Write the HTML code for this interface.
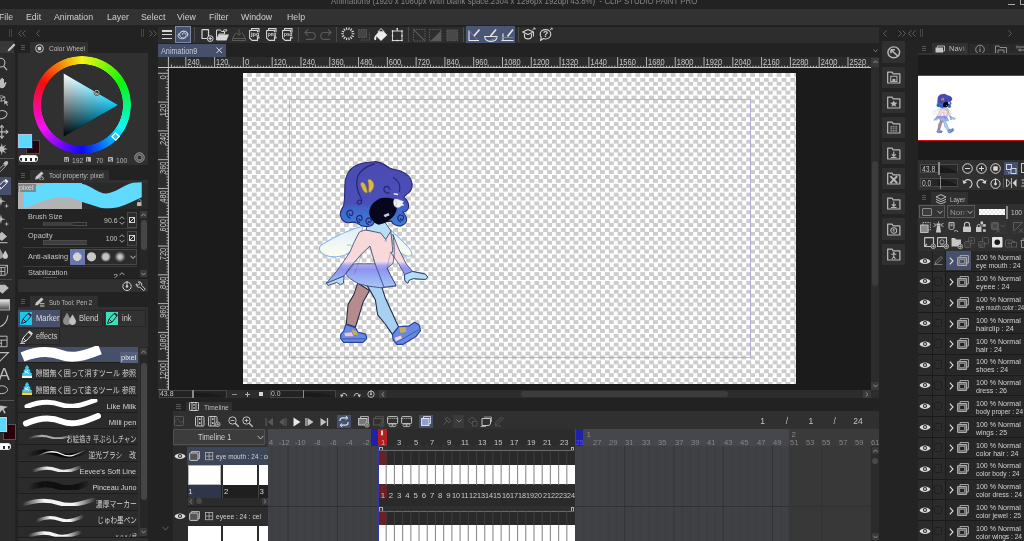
<!DOCTYPE html><html><head><meta charset="utf-8"><title>CLIP STUDIO PAINT PRO</title><style>
*{margin:0;padding:0;box-sizing:border-box}
html,body{width:1024px;height:541px;overflow:hidden;background:#232323}
body{position:relative;font-family:"Liberation Sans","Noto Sans CJK JP",sans-serif;}
div,span.t,svg{position:absolute}
span.t{white-space:nowrap;line-height:1.15;}
svg{overflow:visible}
body{opacity:0.999}
</style></head><body>
<div style="left:0px;top:0px;width:1024px;height:9.4px;background:#222;"></div>
<span class="t" style="left:331.2px;top:-5px;font-size:9.3px;color:#858585;line-height:12px;transform:scaleX(0.845);transform-origin:0 0;">Animation9 (1920 x 1080px With blank space:2304 x 1296px 192dpi 43.8%)&nbsp; - CLIP STUDIO PAINT PRO</span>
<div style="left:1007.7px;top:3.7px;width:7px;height:1px;background:#aaa;"></div>
<div style="left:1020.2px;top:-1px;width:6px;height:5.8px;border:1px solid #aaa;border-top:none;border-radius:0 0 0 1px"></div>
<div style="left:0px;top:9.4px;width:1024px;height:16.1px;background:#323232;"></div>
<span class="t" style="left:-1px;top:11px;font-size:9px;color:#cfcfcf;line-height:12px;transform:scaleX(0.975);transform-origin:0 0;">File</span>
<span class="t" style="left:26px;top:11px;font-size:9px;color:#cfcfcf;line-height:12px;transform:scaleX(0.975);transform-origin:0 0;">Edit</span>
<span class="t" style="left:54px;top:11px;font-size:9px;color:#cfcfcf;line-height:12px;transform:scaleX(0.975);transform-origin:0 0;">Animation</span>
<span class="t" style="left:107px;top:11px;font-size:9px;color:#cfcfcf;line-height:12px;transform:scaleX(0.975);transform-origin:0 0;">Layer</span>
<span class="t" style="left:141px;top:11px;font-size:9px;color:#cfcfcf;line-height:12px;transform:scaleX(0.975);transform-origin:0 0;">Select</span>
<span class="t" style="left:177px;top:11px;font-size:9px;color:#cfcfcf;line-height:12px;transform:scaleX(0.975);transform-origin:0 0;">View</span>
<span class="t" style="left:209px;top:11px;font-size:9px;color:#cfcfcf;line-height:12px;transform:scaleX(0.975);transform-origin:0 0;">Filter</span>
<span class="t" style="left:241px;top:11px;font-size:9px;color:#cfcfcf;line-height:12px;transform:scaleX(0.975);transform-origin:0 0;">Window</span>
<span class="t" style="left:287px;top:11px;font-size:9px;color:#cfcfcf;line-height:12px;transform:scaleX(0.975);transform-origin:0 0;">Help</span>
<div style="left:0px;top:25.5px;width:158px;height:15px;background:#222;"></div>
<div style="left:879px;top:25.5px;width:145px;height:16px;background:#222;"></div>
<div style="left:9px;top:29px;width:1px;height:8px;background:#444;"></div>
<div style="left:11px;top:29px;width:1px;height:8px;background:#444;"></div>
<svg style="left:18px;top:29.5px;" width="8" height="7" viewBox="0 0 8 7"><path d="M3.5 0.5L0.5 3.5L3.5 6.5" stroke="#5e5e5e" stroke-width="1" fill="none"/><path d="M3.5 0.5L0.5 3.5L3.5 6.5" transform="translate(4 0)" stroke="#5e5e5e" stroke-width="1" fill="none"/></svg>
<svg style="left:36px;top:29.5px;" width="8" height="7" viewBox="0 0 8 7"><path d="M3.5 0.5L0.5 3.5L3.5 6.5" stroke="#5e5e5e" stroke-width="1" fill="none"/></svg>
<div style="left:141px;top:29px;width:1px;height:8px;background:#444;"></div>
<div style="left:143px;top:29px;width:1px;height:8px;background:#444;"></div>
<svg style="left:149px;top:29.5px;" width="8" height="7" viewBox="0 0 8 7"><path d="M0.5 0.5L3.5 3.5L0.5 6.5" stroke="#5e5e5e" stroke-width="1" fill="none"/><path d="M0.5 0.5L3.5 3.5L0.5 6.5" transform="translate(4 0)" stroke="#5e5e5e" stroke-width="1" fill="none"/></svg>
<svg style="left:883px;top:29.5px;" width="8" height="7" viewBox="0 0 8 7"><path d="M3.5 0.5L0.5 3.5L3.5 6.5" stroke="#5e5e5e" stroke-width="1" fill="none"/></svg>
<svg style="left:898px;top:29.5px;" width="8" height="7" viewBox="0 0 8 7"><path d="M0.5 0.5L3.5 3.5L0.5 6.5" stroke="#5e5e5e" stroke-width="1" fill="none"/><path d="M0.5 0.5L3.5 3.5L0.5 6.5" transform="translate(4 0)" stroke="#5e5e5e" stroke-width="1" fill="none"/></svg>
<svg style="left:908px;top:29.5px;" width="8" height="7" viewBox="0 0 8 7"><path d="M3.5 0.5L0.5 3.5L3.5 6.5" stroke="#5e5e5e" stroke-width="1" fill="none"/><path d="M3.5 0.5L0.5 3.5L3.5 6.5" transform="translate(4 0)" stroke="#5e5e5e" stroke-width="1" fill="none"/></svg>
<div style="left:920px;top:29px;width:1px;height:8px;background:#444;"></div>
<div style="left:922px;top:29px;width:1px;height:8px;background:#444;"></div>
<svg style="left:1008px;top:29.5px;" width="8" height="7" viewBox="0 0 8 7"><path d="M0.5 0.5L3.5 3.5L0.5 6.5" stroke="#5e5e5e" stroke-width="1" fill="none"/></svg>
<div style="left:158px;top:25.5px;width:721px;height:17.5px;background:#2d2d2d;"></div>
<div style="left:158px;top:25.5px;width:721px;height:0.9px;background:#202020;"></div>
<div style="left:162px;top:30.4px;width:10px;height:1.3px;background:#d6d6d6;"></div>
<div style="left:162px;top:34px;width:10px;height:1.3px;background:#d6d6d6;"></div>
<div style="left:162px;top:37.7px;width:10px;height:1.3px;background:#d6d6d6;"></div>
<div style="left:175px;top:26.3px;width:16px;height:16.3px;background:#48526e;border:1px solid #7f89a6;"></div>
<svg style="left:177px;top:28.5px;" width="12" height="12" viewBox="0 0 12 12"><path d="M6 6.2c-1.2-.8-.6-2.4.9-2.3 2 .1 2.9 2.3 1.6 3.9-1.5 1.7-4.6 1.3-5.6-.9C2 4.600 3.800 2.200 6.600 2.200c2.800 0 4.400 2.300 4 4.600" stroke="#c9cfdf" stroke-width="1" fill="none"/><ellipse cx="6" cy="6" rx="5" ry="3.6" stroke="#c9cfdf" stroke-width="0.9" fill="none" transform="rotate(-20 6 6)"/></svg>
<div style="left:194px;top:27px;width:1px;height:15px;background:#4a4a4a;"></div>
<svg style="left:200.5px;top:28.5px;" width="13" height="13" viewBox="0 0 13 13"><path d="M1 0.600H7.500V8M1 0.600V9.500H6" stroke="#d6d6d6" stroke-width="1.2" fill="none" stroke-linejoin="round"/><circle cx="9.200" cy="9.600" r="2.900" fill="#2d2d2d" stroke="#d6d6d6" stroke-width="1"/><path d="M9.200 7.800V11.400M7.400 9.600H11" stroke="#d6d6d6" stroke-width="1"/></svg>
<svg style="left:216px;top:28.5px;" width="14" height="12" viewBox="0 0 14 12"><path d="M0.500 11V1H4.500L5.500 2.500H8.500V5H3L0.500 11Z" fill="none" stroke="#d6d6d6" stroke-width="1"/><path d="M3 5.500H13L10.500 11.500H0.500Z" fill="#d6d6d6"/><path d="M7 1.500C8.500 .5 10 .5 11 1.500M11 1.500L9.500 0M11 1.500L9.300 2.500" stroke="#d6d6d6" stroke-width="0.900" fill="none"/></svg>
<svg style="left:231.5px;top:28.5px;" width="14" height="12" viewBox="0 0 14 12"><path d="M4 3.500L0.500 9.500V11.500H13.500V9.500L10 3.500M0.500 9.500H13.500" fill="none" stroke="#5a5a5a" stroke-width="1"/><path d="M7 0V6M5 4.200L7 6.500L9 4.200" stroke="#5a5a5a" stroke-width="1" fill="none"/></svg>
<svg style="left:249px;top:28px;" width="12" height="13" viewBox="0 0 12 13"><path d="M2.500 2.500V0.600H10V10H8.500M0.600 2.500H8.500V12.400H3L0.600 10Z" fill="none" stroke="#d6d6d6" stroke-width="1.100" stroke-linejoin="round"/><rect x="1.600" y="4.300" width="9.400" height="4.400" fill="#2d2d2d"/><text x="2" y="7.900" font-size="4.800" font-weight="bold" fill="#dadada" font-family="Liberation Sans,sans-serif" textLength="8.400" lengthAdjust="spacingAndGlyphs">jpg</text></svg>
<svg style="left:265.5px;top:28px;" width="12" height="13" viewBox="0 0 12 13"><path d="M2.500 2.500V0.600H10V10H8.500M0.600 2.500H8.500V12.400H3L0.600 10Z" fill="none" stroke="#d6d6d6" stroke-width="1.100" stroke-linejoin="round"/><rect x="1.600" y="4.300" width="9.400" height="4.400" fill="#2d2d2d"/><text x="2" y="7.900" font-size="4.800" font-weight="bold" fill="#dadada" font-family="Liberation Sans,sans-serif" textLength="8.400" lengthAdjust="spacingAndGlyphs">png</text></svg>
<svg style="left:282px;top:28px;" width="12" height="13" viewBox="0 0 12 13"><path d="M2.500 2.500V0.600H10V10H8.500M0.600 2.500H8.500V12.400H3L0.600 10Z" fill="none" stroke="#d6d6d6" stroke-width="1.100" stroke-linejoin="round"/><rect x="1.600" y="4.300" width="9.400" height="4.400" fill="#2d2d2d"/><text x="2" y="7.900" font-size="4.800" font-weight="bold" fill="#dadada" font-family="Liberation Sans,sans-serif" textLength="8.400" lengthAdjust="spacingAndGlyphs">psd</text></svg>
<div style="left:298px;top:27px;width:1px;height:15px;background:#4a4a4a;"></div>
<svg style="left:303.5px;top:29px;" width="12" height="11" viewBox="0 0 12 11"><path d="M4 0.500L0.800 3.500L4 6.500M0.800 3.500H7.500C9.800 3.500 11.300 5 11.300 7C11.300 9 9.800 10.400 7.500 10.400H2" fill="none" stroke="#5a5a5a" stroke-width="1.100"/></svg>
<svg style="left:319.5px;top:29px;" width="12" height="11" viewBox="0 0 12 11"><path d="M8 0.500L11.200 3.500L8 6.500M11.200 3.500H4.500C2.200 3.500 0.700 5 0.700 7C0.700 9 2.200 10.400 4.500 10.400H10" fill="none" stroke="#5a5a5a" stroke-width="1.100"/></svg>
<div style="left:336px;top:27px;width:1px;height:15px;background:#4a4a4a;"></div>
<svg style="left:340.7px;top:27.4px;" width="14" height="14" viewBox="0 0 14 14"><path d="M10.80 6.80L13.40 6.80M10.40 8.54L12.75 9.66M9.29 9.93L10.92 11.96M7.69 10.70L8.27 13.23M5.91 10.70L5.33 13.23M4.31 9.93L2.68 11.96M3.20 8.54L0.85 9.66M2.80 6.80L0.20 6.80M3.20 5.06L0.85 3.94M4.31 3.67L2.68 1.64M5.91 2.90L5.33 0.37M7.69 2.90L8.27 0.37M9.29 3.67L10.92 1.64M10.40 5.06L12.75 3.94" stroke="#e0e0e0" stroke-width="1.100" fill="none"/></svg>
<svg style="left:358px;top:29px;" width="13" height="12" viewBox="0 0 13 12"><rect x="0.500" y="0.500" width="8" height="8" fill="#444" stroke="#5a5a5a" stroke-width="1" stroke-dasharray="1.500 1"/><path d="M3 11H11.500V3.500" fill="none" stroke="#5a5a5a" stroke-width="1" stroke-dasharray="1.500 1"/></svg>
<svg style="left:373.5px;top:27.8px;" width="14" height="14" viewBox="0 0 14 14"><path d="M7 0.500L13.200 7L7 13L1.500 7.500Z" fill="#ececec"/><path d="M7 0.500L10 3.700H4Z" fill="#2d2d2d" stroke="#ececec" stroke-width="0.800"/><path d="M1.800 7C0.300 8.500 0 10 0.300 11.500C0.600 12.500 2 12.500 2.200 11.500C2.400 10 2.200 9 2.500 8Z" fill="#ececec"/></svg>
<svg style="left:391px;top:28px;" width="13" height="14" viewBox="0 0 13 14"><rect x="1.500" y="3" width="9.500" height="9.500" fill="none" stroke="#e0e0e0" stroke-width="0.900"/><path d="M6.250 0.500V3" stroke="#e0e0e0" stroke-width="0.900"/><g fill="#e8e8e8"><rect x="5.500" y="0" width="1.500" height="1.500"/><rect x="0.800" y="2.300" width="1.400" height="1.400"/><rect x="10.300" y="2.300" width="1.400" height="1.400"/><rect x="0.800" y="11.800" width="1.400" height="1.400"/><rect x="10.300" y="11.800" width="1.400" height="1.400"/><rect x="5.550" y="11.800" width="1.400" height="1.400"/><rect x="0.800" y="7.050" width="1.400" height="1.400"/><rect x="10.300" y="7.050" width="1.400" height="1.400"/></g></svg>
<div style="left:408px;top:27px;width:1px;height:15px;background:#4a4a4a;"></div>
<svg style="left:412.8px;top:28.5px;" width="13" height="13" viewBox="0 0 13 13"><rect x="0.500" y="0.500" width="11.500" height="11.500" fill="none" stroke="#5a5a5a" stroke-width="1" stroke-dasharray="1.500 1"/><path d="M0.500 0.500L12 12" stroke="#5a5a5a" stroke-width="1.100"/></svg>
<svg style="left:429px;top:28.5px;" width="13" height="13" viewBox="0 0 13 13"><rect x="0.500" y="0.500" width="11.500" height="11.500" fill="none" stroke="#5a5a5a" stroke-width="1" stroke-dasharray="1.500 1"/><path d="M12 1.500V12H1.500Z" fill="#5a5a5a"/></svg>
<svg style="left:445.8px;top:28.5px;" width="13" height="13" viewBox="0 0 13 13"><rect x="1" y="1" width="10.500" height="10.500" fill="#484848" stroke="#5a5a5a" stroke-width="1.200" stroke-dasharray="1.500 1"/></svg>
<div style="left:463px;top:27px;width:1px;height:15px;background:#4a4a4a;"></div>
<div style="left:465.5px;top:26.3px;width:49.5px;height:16.3px;background:#4a5676;"></div>
<svg style="left:468px;top:28.5px;" width="13" height="13" viewBox="0 0 13 13"><path d="M1 1.500V11.500H11" fill="none" stroke="#e8e8e8" stroke-width="1.100"/><path d="M1.500 2L9 10.500" stroke="#8e7fb0" stroke-width="0.900"/><path d="M6 7L11.500 0.500" stroke="#e8e8e8" stroke-width="1.600"/></svg>
<svg style="left:483.5px;top:28.5px;" width="14" height="13" viewBox="0 0 14 13"><path d="M0.600 7.500H13C13 10.500 10.500 12.400 7 12.400C3.500 12.400 0.800 10.500 0.600 7.500Z" fill="none" stroke="#e8e8e8" stroke-width="1.100"/><path d="M7.500 10.500C10 10.500 12 9.500 12.500 8" stroke="#8e7fb0" stroke-width="0.900" fill="none"/><path d="M6.500 7L12 0.500" stroke="#e8e8e8" stroke-width="1.600"/></svg>
<svg style="left:500.5px;top:28.5px;" width="13" height="13" viewBox="0 0 13 13"><path d="M2 4.500V12M0.500 11.500H12.500" fill="none" stroke="#e8e8e8" stroke-width="1.100"/><path d="M0.500 8.500H12.500" stroke="#8e7fb0" stroke-width="0.900"/><path d="M6.500 7.500L12 0.500" stroke="#e8e8e8" stroke-width="1.600"/></svg>
<div style="left:517.5px;top:27px;width:1px;height:15px;background:#4a4a4a;"></div>
<svg style="left:521.5px;top:28px;" width="14" height="12" viewBox="0 0 14 12"><path d="M0.600 4L6 1.500L11.500 4L6 6.500Z" fill="none" stroke="#d6d6d6" stroke-width="1.100" stroke-linejoin="round"/><path d="M2.500 5.500V9C3.500 11.500 8.500 11.500 9.500 9V5.500" fill="none" stroke="#d6d6d6" stroke-width="1.100"/><path d="M11.500 4V8.500" stroke="#d6d6d6" stroke-width="1"/><path d="M10.500 2L13 0M13 0H11.300M13 0V1.700" stroke="#d6d6d6" stroke-width="0.800" fill="none"/></svg>
<svg style="left:538.5px;top:27.5px;" width="14" height="14" viewBox="0 0 14 14"><path d="M6.500 1.600C9.500 1.600 11.800 3.600 11.800 6.300C11.800 9 9.500 11 6.500 11C5.700 11 5 10.900 4.300 10.600L1.500 12.500L2.300 9.500C1.600 8.600 1.200 7.500 1.200 6.300C1.200 3.600 3.500 1.600 6.500 1.600Z" fill="none" stroke="#d6d6d6" stroke-width="1.100" stroke-linejoin="round"/><text x="3.900" y="9.400" font-size="8.600" font-weight="bold" fill="#d6d6d6" font-family="Liberation Sans,sans-serif">?</text><path d="M11 2L13.200 0.200M13.200 0.200H11.700M13.200 0.200V1.700" stroke="#d6d6d6" stroke-width="0.800" fill="none"/></svg>
<div style="left:158px;top:43px;width:721px;height:14px;background:#222;"></div>
<div style="left:158px;top:44px;width:68px;height:13px;background:#46506b;"></div>
<span class="t" style="left:161.2px;top:45px;font-size:8.5px;color:#c6cad6;line-height:12px;transform:scaleX(0.854);transform-origin:0 0;">Animation9</span>
<svg style="left:216px;top:47px;" width="7" height="7" viewBox="0 0 7 7"><path d="M0.5 0.5L6 6M6 0.5L0.5 6" stroke="#e0e0e0" stroke-width="1" fill="none"/></svg>
<svg style="left:872.5px;top:48.5px;" width="5" height="4" viewBox="0 0 5 4"><path d="M0.5 0.5L2.5 2.8L4.5 0.5" stroke="#858585" stroke-width="0.9" fill="none"/></svg>
<div style="left:158px;top:57px;width:721px;height:341px;background:#1b1b1b;"></div>
<div style="left:243.3px;top:73.3px;width:552.7px;height:311.0px;background:#fff;background-image:conic-gradient(#cccccc 25%,#fff 25% 50%,#cccccc 50% 75%,#fff 75%);background-size:8.84px 8.84px;"></div>
<div style="left:289.0px;top:98.9px;width:462.2px;height:259.4px;border:0.9px solid rgba(150,150,222,0.6);"></div>
<svg style="left:158px;top:57px;overflow:hidden" width="713" height="11" viewBox="0 0 713 11"><rect x="0" y="0" width="713" height="11" fill="#2c2c2c"/><path d="M13.43 10.5v-3M16.30 10.5v-1.8M19.18 10.5v-1.8M22.06 10.5v-1.8M24.94 10.5v-1.8M27.82 10.5v-10.5M30.70 10.5v-1.8M33.58 10.5v-1.8M36.46 10.5v-1.8M39.34 10.5v-1.8M42.22 10.5v-3M45.09 10.5v-1.8M47.97 10.5v-1.8M50.85 10.5v-1.8M53.73 10.5v-1.8M56.61 10.5v-10.5M59.49 10.5v-1.8M62.37 10.5v-1.8M65.25 10.5v-1.8M68.13 10.5v-1.8M71.01 10.5v-3M73.88 10.5v-1.8M76.76 10.5v-1.8M79.64 10.5v-1.8M82.52 10.5v-1.8M85.40 10.5v-10.5M88.28 10.5v-1.8M91.16 10.5v-1.8M94.04 10.5v-1.8M96.92 10.5v-1.8M99.80 10.5v-3M102.67 10.5v-1.8M105.55 10.5v-1.8M108.43 10.5v-1.8M111.31 10.5v-1.8M114.19 10.5v-10.5M117.07 10.5v-1.8M119.95 10.5v-1.8M122.83 10.5v-1.8M125.71 10.5v-1.8M128.59 10.5v-3M131.46 10.5v-1.8M134.34 10.5v-1.8M137.22 10.5v-1.8M140.10 10.5v-1.8M142.98 10.5v-10.5M145.86 10.5v-1.8M148.74 10.5v-1.8M151.62 10.5v-1.8M154.50 10.5v-1.8M157.38 10.5v-3M160.25 10.5v-1.8M163.13 10.5v-1.8M166.01 10.5v-1.8M168.89 10.5v-1.8M171.77 10.5v-10.5M174.65 10.5v-1.8M177.53 10.5v-1.8M180.41 10.5v-1.8M183.29 10.5v-1.8M186.17 10.5v-3M189.04 10.5v-1.8M191.92 10.5v-1.8M194.80 10.5v-1.8M197.68 10.5v-1.8M200.56 10.5v-10.5M203.44 10.5v-1.8M206.32 10.5v-1.8M209.20 10.5v-1.8M212.08 10.5v-1.8M214.96 10.5v-3M217.83 10.5v-1.8M220.71 10.5v-1.8M223.59 10.5v-1.8M226.47 10.5v-1.8M229.35 10.5v-10.5M232.23 10.5v-1.8M235.11 10.5v-1.8M237.99 10.5v-1.8M240.87 10.5v-1.8M243.75 10.5v-3M246.62 10.5v-1.8M249.50 10.5v-1.8M252.38 10.5v-1.8M255.26 10.5v-1.8M258.14 10.5v-10.5M261.02 10.5v-1.8M263.90 10.5v-1.8M266.78 10.5v-1.8M269.66 10.5v-1.8M272.53 10.5v-3M275.41 10.5v-1.8M278.29 10.5v-1.8M281.17 10.5v-1.8M284.05 10.5v-1.8M286.93 10.5v-10.5M289.81 10.5v-1.8M292.69 10.5v-1.8M295.57 10.5v-1.8M298.45 10.5v-1.8M301.33 10.5v-3M304.20 10.5v-1.8M307.08 10.5v-1.8M309.96 10.5v-1.8M312.84 10.5v-1.8M315.72 10.5v-10.5M318.60 10.5v-1.8M321.48 10.5v-1.8M324.36 10.5v-1.8M327.24 10.5v-1.8M330.12 10.5v-3M332.99 10.5v-1.8M335.87 10.5v-1.8M338.75 10.5v-1.8M341.63 10.5v-1.8M344.51 10.5v-10.5M347.39 10.5v-1.8M350.27 10.5v-1.8M353.15 10.5v-1.8M356.03 10.5v-1.8M358.90 10.5v-3M361.78 10.5v-1.8M364.66 10.5v-1.8M367.54 10.5v-1.8M370.42 10.5v-1.8M373.30 10.5v-10.5M376.18 10.5v-1.8M379.06 10.5v-1.8M381.94 10.5v-1.8M384.82 10.5v-1.8M387.69 10.5v-3M390.57 10.5v-1.8M393.45 10.5v-1.8M396.33 10.5v-1.8M399.21 10.5v-1.8M402.09 10.5v-10.5M404.97 10.5v-1.8M407.85 10.5v-1.8M410.73 10.5v-1.8M413.61 10.5v-1.8M416.49 10.5v-3M419.36 10.5v-1.8M422.24 10.5v-1.8M425.12 10.5v-1.8M428.00 10.5v-1.8M430.88 10.5v-10.5M433.76 10.5v-1.8M436.64 10.5v-1.8M439.52 10.5v-1.8M442.40 10.5v-1.8M445.27 10.5v-3M448.15 10.5v-1.8M451.03 10.5v-1.8M453.91 10.5v-1.8M456.79 10.5v-1.8M459.67 10.5v-10.5M462.55 10.5v-1.8M465.43 10.5v-1.8M468.31 10.5v-1.8M471.19 10.5v-1.8M474.07 10.5v-3M476.94 10.5v-1.8M479.82 10.5v-1.8M482.70 10.5v-1.8M485.58 10.5v-1.8M488.46 10.5v-10.5M491.34 10.5v-1.8M494.22 10.5v-1.8M497.10 10.5v-1.8M499.98 10.5v-1.8M502.86 10.5v-3M505.73 10.5v-1.8M508.61 10.5v-1.8M511.49 10.5v-1.8M514.37 10.5v-1.8M517.25 10.5v-10.5M520.13 10.5v-1.8M523.01 10.5v-1.8M525.89 10.5v-1.8M528.77 10.5v-1.8M531.64 10.5v-3M534.52 10.5v-1.8M537.40 10.5v-1.8M540.28 10.5v-1.8M543.16 10.5v-1.8M546.04 10.5v-10.5M548.92 10.5v-1.8M551.80 10.5v-1.8M554.68 10.5v-1.8M557.56 10.5v-1.8M560.43 10.5v-3M563.31 10.5v-1.8M566.19 10.5v-1.8M569.07 10.5v-1.8M571.95 10.5v-1.8M574.83 10.5v-10.5M577.71 10.5v-1.8M580.59 10.5v-1.8M583.47 10.5v-1.8M586.35 10.5v-1.8M589.23 10.5v-3M592.10 10.5v-1.8M594.98 10.5v-1.8M597.86 10.5v-1.8M600.74 10.5v-1.8M603.62 10.5v-10.5M606.50 10.5v-1.8M609.38 10.5v-1.8M612.26 10.5v-1.8M615.14 10.5v-1.8M618.01 10.5v-3M620.89 10.5v-1.8M623.77 10.5v-1.8M626.65 10.5v-1.8M629.53 10.5v-1.8M632.41 10.5v-10.5M635.29 10.5v-1.8M638.17 10.5v-1.8M641.05 10.5v-1.8M643.93 10.5v-1.8M646.80 10.5v-3M649.68 10.5v-1.8M652.56 10.5v-1.8M655.44 10.5v-1.8M658.32 10.5v-1.8M661.20 10.5v-10.5M664.08 10.5v-1.8M666.96 10.5v-1.8M669.84 10.5v-1.8M672.72 10.5v-1.8M675.59 10.5v-3M678.47 10.5v-1.8M681.35 10.5v-1.8M684.23 10.5v-1.8M687.11 10.5v-1.8M689.99 10.5v-10.5M692.87 10.5v-1.8M695.75 10.5v-1.8M698.63 10.5v-1.8M701.51 10.5v-1.8M704.38 10.5v-3M707.26 10.5v-1.8M710.14 10.5v-1.8" stroke="#c4c4c4" stroke-width="0.9" fill="none"/><path d="M0 10.5H713M10.4 0V11" stroke="#c4c4c4" stroke-width="1" fill="none"/><text x="29.3" y="8.4" font-size="8.2" fill="#c8c8c8" font-family="Liberation Sans,sans-serif" textLength="12.4" lengthAdjust="spacingAndGlyphs">240</text><text x="58.1" y="8.4" font-size="8.2" fill="#c8c8c8" font-family="Liberation Sans,sans-serif" textLength="12.4" lengthAdjust="spacingAndGlyphs">120</text><text x="86.9" y="8.4" font-size="8.2" fill="#c8c8c8" font-family="Liberation Sans,sans-serif" textLength="4.4" lengthAdjust="spacingAndGlyphs">0</text><text x="115.7" y="8.4" font-size="8.2" fill="#c8c8c8" font-family="Liberation Sans,sans-serif" textLength="12.4" lengthAdjust="spacingAndGlyphs">120</text><text x="144.5" y="8.4" font-size="8.2" fill="#c8c8c8" font-family="Liberation Sans,sans-serif" textLength="12.4" lengthAdjust="spacingAndGlyphs">240</text><text x="173.3" y="8.4" font-size="8.2" fill="#c8c8c8" font-family="Liberation Sans,sans-serif" textLength="12.4" lengthAdjust="spacingAndGlyphs">360</text><text x="202.1" y="8.4" font-size="8.2" fill="#c8c8c8" font-family="Liberation Sans,sans-serif" textLength="12.4" lengthAdjust="spacingAndGlyphs">480</text><text x="230.8" y="8.4" font-size="8.2" fill="#c8c8c8" font-family="Liberation Sans,sans-serif" textLength="12.4" lengthAdjust="spacingAndGlyphs">600</text><text x="259.6" y="8.4" font-size="8.2" fill="#c8c8c8" font-family="Liberation Sans,sans-serif" textLength="12.4" lengthAdjust="spacingAndGlyphs">720</text><text x="288.4" y="8.4" font-size="8.2" fill="#c8c8c8" font-family="Liberation Sans,sans-serif" textLength="12.4" lengthAdjust="spacingAndGlyphs">840</text><text x="317.2" y="8.4" font-size="8.2" fill="#c8c8c8" font-family="Liberation Sans,sans-serif" textLength="12.4" lengthAdjust="spacingAndGlyphs">960</text><text x="346.0" y="8.4" font-size="8.2" fill="#c8c8c8" font-family="Liberation Sans,sans-serif" textLength="16.6" lengthAdjust="spacingAndGlyphs">1080</text><text x="374.8" y="8.4" font-size="8.2" fill="#c8c8c8" font-family="Liberation Sans,sans-serif" textLength="16.6" lengthAdjust="spacingAndGlyphs">1200</text><text x="403.6" y="8.4" font-size="8.2" fill="#c8c8c8" font-family="Liberation Sans,sans-serif" textLength="16.6" lengthAdjust="spacingAndGlyphs">1320</text><text x="432.4" y="8.4" font-size="8.2" fill="#c8c8c8" font-family="Liberation Sans,sans-serif" textLength="16.6" lengthAdjust="spacingAndGlyphs">1440</text><text x="461.2" y="8.4" font-size="8.2" fill="#c8c8c8" font-family="Liberation Sans,sans-serif" textLength="16.6" lengthAdjust="spacingAndGlyphs">1560</text><text x="490.0" y="8.4" font-size="8.2" fill="#c8c8c8" font-family="Liberation Sans,sans-serif" textLength="16.6" lengthAdjust="spacingAndGlyphs">1680</text><text x="518.8" y="8.4" font-size="8.2" fill="#c8c8c8" font-family="Liberation Sans,sans-serif" textLength="16.6" lengthAdjust="spacingAndGlyphs">1800</text><text x="547.5" y="8.4" font-size="8.2" fill="#c8c8c8" font-family="Liberation Sans,sans-serif" textLength="16.6" lengthAdjust="spacingAndGlyphs">1920</text><text x="576.3" y="8.4" font-size="8.2" fill="#c8c8c8" font-family="Liberation Sans,sans-serif" textLength="16.6" lengthAdjust="spacingAndGlyphs">2040</text><text x="605.1" y="8.4" font-size="8.2" fill="#c8c8c8" font-family="Liberation Sans,sans-serif" textLength="16.6" lengthAdjust="spacingAndGlyphs">2160</text><text x="633.9" y="8.4" font-size="8.2" fill="#c8c8c8" font-family="Liberation Sans,sans-serif" textLength="16.6" lengthAdjust="spacingAndGlyphs">2280</text><text x="662.7" y="8.4" font-size="8.2" fill="#c8c8c8" font-family="Liberation Sans,sans-serif" textLength="16.6" lengthAdjust="spacingAndGlyphs">2400</text><text x="691.5" y="8.4" font-size="8.2" fill="#c8c8c8" font-family="Liberation Sans,sans-serif" textLength="16.6" lengthAdjust="spacingAndGlyphs">2520</text></svg>
<svg style="left:158px;top:68px;overflow:hidden" width="11" height="322" viewBox="0 0 11 322"><rect x="0" y="0" width="10.4" height="322" fill="#2c2c2c"/><path d="M10.4 2.42h-1.8M10.4 5.30h-10.4M10.4 8.18h-1.8M10.4 11.06h-1.8M10.4 13.94h-1.8M10.4 16.82h-1.8M10.4 19.69h-3M10.4 22.57h-1.8M10.4 25.45h-1.8M10.4 28.33h-1.8M10.4 31.21h-1.8M10.4 34.09h-10.4M10.4 36.97h-1.8M10.4 39.85h-1.8M10.4 42.73h-1.8M10.4 45.61h-1.8M10.4 48.48h-3M10.4 51.36h-1.8M10.4 54.24h-1.8M10.4 57.12h-1.8M10.4 60.00h-1.8M10.4 62.88h-10.4M10.4 65.76h-1.8M10.4 68.64h-1.8M10.4 71.52h-1.8M10.4 74.40h-1.8M10.4 77.27h-3M10.4 80.15h-1.8M10.4 83.03h-1.8M10.4 85.91h-1.8M10.4 88.79h-1.8M10.4 91.67h-10.4M10.4 94.55h-1.8M10.4 97.43h-1.8M10.4 100.31h-1.8M10.4 103.19h-1.8M10.4 106.06h-3M10.4 108.94h-1.8M10.4 111.82h-1.8M10.4 114.70h-1.8M10.4 117.58h-1.8M10.4 120.46h-10.4M10.4 123.34h-1.8M10.4 126.22h-1.8M10.4 129.10h-1.8M10.4 131.98h-1.8M10.4 134.86h-3M10.4 137.73h-1.8M10.4 140.61h-1.8M10.4 143.49h-1.8M10.4 146.37h-1.8M10.4 149.25h-10.4M10.4 152.13h-1.8M10.4 155.01h-1.8M10.4 157.89h-1.8M10.4 160.77h-1.8M10.4 163.64h-3M10.4 166.52h-1.8M10.4 169.40h-1.8M10.4 172.28h-1.8M10.4 175.16h-1.8M10.4 178.04h-10.4M10.4 180.92h-1.8M10.4 183.80h-1.8M10.4 186.68h-1.8M10.4 189.56h-1.8M10.4 192.44h-3M10.4 195.31h-1.8M10.4 198.19h-1.8M10.4 201.07h-1.8M10.4 203.95h-1.8M10.4 206.83h-10.4M10.4 209.71h-1.8M10.4 212.59h-1.8M10.4 215.47h-1.8M10.4 218.35h-1.8M10.4 221.23h-3M10.4 224.10h-1.8M10.4 226.98h-1.8M10.4 229.86h-1.8M10.4 232.74h-1.8M10.4 235.62h-10.4M10.4 238.50h-1.8M10.4 241.38h-1.8M10.4 244.26h-1.8M10.4 247.14h-1.8M10.4 250.01h-3M10.4 252.89h-1.8M10.4 255.77h-1.8M10.4 258.65h-1.8M10.4 261.53h-1.8M10.4 264.41h-10.4M10.4 267.29h-1.8M10.4 270.17h-1.8M10.4 273.05h-1.8M10.4 275.93h-1.8M10.4 278.81h-3M10.4 281.68h-1.8M10.4 284.56h-1.8M10.4 287.44h-1.8M10.4 290.32h-1.8M10.4 293.20h-10.4M10.4 296.08h-1.8M10.4 298.96h-1.8M10.4 301.84h-1.8M10.4 304.72h-1.8M10.4 307.59h-3M10.4 310.47h-1.8M10.4 313.35h-1.8M10.4 316.23h-1.8M10.4 319.11h-1.8M10.4 321.99h-10.4" stroke="#c4c4c4" stroke-width="0.9" fill="none"/><path d="M10.4 0V322" stroke="#c4c4c4" stroke-width="1" fill="none"/><text transform="translate(8.4 11.5) rotate(-90)" font-size="8.2" fill="#c8c8c8" font-family="Liberation Sans,sans-serif" textLength="4.4" lengthAdjust="spacingAndGlyphs">0</text><text transform="translate(8.4 48.3) rotate(-90)" font-size="8.2" fill="#c8c8c8" font-family="Liberation Sans,sans-serif" textLength="12.4" lengthAdjust="spacingAndGlyphs">120</text><text transform="translate(8.4 77.1) rotate(-90)" font-size="8.2" fill="#c8c8c8" font-family="Liberation Sans,sans-serif" textLength="12.4" lengthAdjust="spacingAndGlyphs">240</text><text transform="translate(8.4 105.9) rotate(-90)" font-size="8.2" fill="#c8c8c8" font-family="Liberation Sans,sans-serif" textLength="12.4" lengthAdjust="spacingAndGlyphs">360</text><text transform="translate(8.4 134.7) rotate(-90)" font-size="8.2" fill="#c8c8c8" font-family="Liberation Sans,sans-serif" textLength="12.4" lengthAdjust="spacingAndGlyphs">480</text><text transform="translate(8.4 163.5) rotate(-90)" font-size="8.2" fill="#c8c8c8" font-family="Liberation Sans,sans-serif" textLength="12.4" lengthAdjust="spacingAndGlyphs">600</text><text transform="translate(8.4 192.2) rotate(-90)" font-size="8.2" fill="#c8c8c8" font-family="Liberation Sans,sans-serif" textLength="12.4" lengthAdjust="spacingAndGlyphs">720</text><text transform="translate(8.4 221.0) rotate(-90)" font-size="8.2" fill="#c8c8c8" font-family="Liberation Sans,sans-serif" textLength="12.4" lengthAdjust="spacingAndGlyphs">840</text><text transform="translate(8.4 249.8) rotate(-90)" font-size="8.2" fill="#c8c8c8" font-family="Liberation Sans,sans-serif" textLength="12.4" lengthAdjust="spacingAndGlyphs">960</text><text transform="translate(8.4 282.8) rotate(-90)" font-size="8.2" fill="#c8c8c8" font-family="Liberation Sans,sans-serif" textLength="16.6" lengthAdjust="spacingAndGlyphs">1080</text><text transform="translate(8.4 311.6) rotate(-90)" font-size="8.2" fill="#c8c8c8" font-family="Liberation Sans,sans-serif" textLength="16.6" lengthAdjust="spacingAndGlyphs">1200</text><text transform="translate(8.4 340.4) rotate(-90)" font-size="8.2" fill="#c8c8c8" font-family="Liberation Sans,sans-serif" textLength="16.6" lengthAdjust="spacingAndGlyphs">1320</text></svg>
<div style="left:871px;top:57px;width:8px;height:341px;background:#2c2c2c;"></div>
<div style="left:158px;top:390px;width:721px;height:8px;background:#2c2c2c;"></div>
<svg style="left:0px;top:0px;pointer-events:none" width="1024" height="541" viewBox="0 0 1024 541"><defs>
<linearGradient id="hairg" gradientUnits="userSpaceOnUse" x1="0" y1="45" x2="0" y2="470"><stop offset="0" stop-color="#4a4bb2"/><stop offset="0.640" stop-color="#4a4fb8"/><stop offset="0.720" stop-color="#4264c8"/><stop offset="0.860" stop-color="#3c74d4"/><stop offset="1" stop-color="#3c7cdc"/></linearGradient>
<linearGradient id="coatg" gradientUnits="userSpaceOnUse" x1="0" y1="60" x2="0" y2="490"><stop offset="0" stop-color="#f7dadc"/><stop offset="0.520" stop-color="#f8d8d8"/><stop offset="0.590" stop-color="#f3dcea"/><stop offset="0.655" stop-color="#a9a4ee"/><stop offset="0.720" stop-color="#8d94f0"/><stop offset="0.850" stop-color="#98aef4"/><stop offset="1" stop-color="#a8c6f6"/></linearGradient>
<linearGradient id="wingg" gradientUnits="userSpaceOnUse" x1="0" y1="70" x2="0" y2="290"><stop offset="0" stop-color="#dbeaf9"/><stop offset="0.500" stop-color="#eef6f6"/><stop offset="1" stop-color="#fdfde9"/></linearGradient>
</defs><g transform="translate(320 275) scale(0.14778)" stroke-linejoin="round"><path d="M255 55L335 105L292 182L272 250L240 352L178 332L190 200L230 130Z" fill="#b48c8e" stroke="#1d2440" stroke-width="7"/><path d="M318 72L415 70L440 150L490 260L532 352L490 402L440 330L390 270L375 170L342 110Z" fill="#a8d0f0" stroke="#1d2440" stroke-width="7"/><path d="M140 402L160 380L175 335L240 356L255 386L310 400L316 430L290 456L160 456L140 430Z" fill="#6a88e2" stroke="#27449a" stroke-width="8"/><path d="M165 392L215 388L225 415L170 415Z" fill="#f0c8cc"/><path d="M215 368L250 380L255 408L225 405Z" fill="#c8ac58"/><path d="M150 432H305" stroke="#2f56b4" stroke-width="6"/><path d="M490 402L532 350L600 346L640 320L670 336L680 376L650 416L560 470L520 470L495 440Z" fill="#6a88e2" stroke="#27449a" stroke-width="8"/><path d="M505 425L548 410L555 430L512 448Z" fill="#f0d4d8"/><path d="M535 356L580 352L585 385L545 392Z" fill="#c8ac58"/><path d="M515 458L665 372" stroke="#2f56b4" stroke-width="6"/></g><g transform="translate(310 215) scale(0.14790)" stroke-linejoin="round"><path d="M360 75C300 90 200 130 150 160C110 182 80 198 68 212C55 232 75 262 100 270C150 290 210 285 250 265C290 240 330 180 360 75Z" fill="url(#wingg)" stroke="#86b9ec" stroke-width="7"/><path d="M250 205C270 195 295 210 290 240C285 262 262 268 245 258" fill="none" stroke="#86b9ec" stroke-width="6"/><path d="M545 100C585 135 640 190 665 218C690 245 695 268 680 276C660 284 625 268 590 240C570 222 555 190 545 100Z" fill="url(#wingg)" stroke="#86b9ec" stroke-width="7"/><path d="M240 398L270 430L330 466L400 482L480 492L582 480L540 400L510 330L300 330Z" fill="url(#coatg)" stroke="#2a3562" stroke-width="5"/><path d="M110 460L122 476L180 456L205 472L226 460L230 412Z" fill="#b5dcf5" stroke="#1e2a55" stroke-width="5"/><path d="M332 118C345 108 370 100 400 100L545 108C552 150 556 200 560 250L546 252L600 332L640 402L640 440L660 462L672 440L700 430L780 436L796 420L780 400L692 380L650 330L600 230L560 130C570 180 575 280 560 330L520 360L582 478L500 488L440 330L405 210L350 262L280 342L230 412L110 462L180 380L230 310L270 250L300 180Z" fill="url(#coatg)" stroke="#2a3562" stroke-width="5"/><path d="M640 402L692 382L780 400L796 420L780 436L700 430L672 440L660 462L640 440Z" fill="#b5dcf5" stroke="#1e2a55" stroke-width="5"/><path d="M405 210L440 330L500 488M350 262L300 400M545 250L520 360" fill="none" stroke="#6a6aa8" stroke-width="4" opacity="0.700"/><path d="M385 70L400 40L500 40L548 108L512 165L478 122L380 102Z" fill="#b8ddf6" stroke="#1e2a55" stroke-width="5"/><circle cx="512" cy="172" r="6" fill="none" stroke="#5a78b0" stroke-width="3"/></g><g transform="translate(330 154.800) scale(0.14778 0.15250)" stroke-linejoin="round"><path d="M300 45C330 42 365 60 400 85C420 95 450 98 480 108C520 122 550 150 556 190C558 225 540 250 510 265L500 280C525 295 538 325 530 350C524 366 508 374 492 376C512 395 524 420 515 440C505 462 478 470 455 464C438 460 422 448 415 435L300 442C290 462 265 472 240 470C215 468 195 458 182 448C170 440 150 440 125 445C100 448 75 425 70 395C68 375 78 355 92 335C98 300 100 260 100 220C100 190 104 160 112 140C125 105 160 75 195 62C230 50 270 46 300 45Z" fill="url(#hairg)" stroke="#25266e" stroke-width="7"/><path d="M300 60C250 75 205 105 188 140C175 175 180 230 205 275C222 300 212 330 192 322C176 314 190 292 206 300M430 150C465 170 480 205 470 240M400 250C380 255 360 240 365 220C372 200 400 205 405 225M135 415C110 405 105 375 128 365C150 358 165 380 150 395C142 402 130 398 130 388M200 445C178 438 172 410 192 400C212 392 226 412 214 426C206 434 196 430 196 420M262 458C242 452 236 426 254 416C272 408 286 426 276 440C270 447 260 444 260 436M478 440C456 432 452 405 472 396C492 390 504 410 494 424C486 432 476 428 476 418" fill="none" stroke="#25266e" stroke-width="8" stroke-linecap="round"/><path d="M335 286C350 280 395 280 425 286C440 292 450 318 452 345C452 372 438 398 420 412C405 426 385 438 370 448L330 458C312 452 300 446 292 436C278 418 262 398 266 372C268 350 278 330 296 312Z" fill="#06061c"/><path d="M210 182C224 172 240 192 246 214C250 228 256 240 252 250C240 254 226 240 218 222C210 206 202 192 210 182ZM258 162C270 154 288 166 296 188C302 208 292 232 268 250C258 244 260 226 262 210C264 194 252 172 258 162Z" fill="#d9b84e" stroke="#8c6a22" stroke-width="4"/><path d="M435 292C455 285 475 300 498 305L490 318L502 330L480 335C470 350 450 350 436 335C428 322 428 302 435 292Z" fill="#eef0f6" stroke="#b4c4e4" stroke-width="3"/><path d="M440 300C450 300 452 330 444 338" stroke="#d8b8a8" stroke-width="5" fill="none"/><path d="M432 250L462 256L460 266L430 260Z" fill="#e4e8f4"/><path d="M362 395L395 382L404 396L372 410Z" fill="#c8ccd8"/></g></svg>
<div style="left:871px;top:57.5px;width:8px;height:9px;background:#3a3a3a;"></div>
<svg style="left:872.5px;top:60px;" width="5" height="4" viewBox="0 0 5 4"><path d="M0.500 3L2.500 0.800L4.500 3" fill="none" stroke="#999" stroke-width="0.900"/></svg>
<div style="left:872px;top:160.8px;width:6px;height:125.5px;background:#3c3c3c;border-radius:3px;"></div>
<div style="left:871px;top:381.6px;width:8px;height:8px;background:#3a3a3a;"></div>
<svg style="left:872.5px;top:384px;" width="5" height="4" viewBox="0 0 5 4"><path d="M0.500 0.800L2.500 3L4.500 0.800" fill="none" stroke="#999" stroke-width="0.900"/></svg>
<div style="left:158.5px;top:390px;width:68px;height:7.8px;background:#232323;border:1px solid #454545;"></div>
<svg style="left:192px;top:390.5px;" width="34.0" height="6.8" viewBox="0 0 34.0 6.8"><path d="M0 6.800V1.500C13.8 1.500 24.1 2.500 34.0 6.500V6.800Z" fill="#1a1a1a"/></svg>
<span class="t" style="left:159.5px;top:388px;font-size:7.8px;color:#c4c4c4;line-height:11px;transform:scaleX(0.889);transform-origin:0 0;">43.8</span>
<div style="left:192px;top:389.6px;width:1.5px;height:8.4px;background:#8a8a8a;"></div>
<div style="left:269.5px;top:390px;width:66.3px;height:7.8px;background:#232323;border:1px solid #454545;"></div>
<svg style="left:302.5px;top:390.5px;" width="32.80000000000001" height="6.8" viewBox="0 0 32.80000000000001 6.8"><path d="M0 6.800V1.500C13.3 1.500 23.3 2.500 32.8 6.500V6.800Z" fill="#1a1a1a"/></svg>
<span class="t" style="left:270.5px;top:388px;font-size:7.8px;color:#c4c4c4;line-height:11px;transform:scaleX(0.876);transform-origin:0 0;">0.0</span>
<div style="left:302.5px;top:389.6px;width:1.5px;height:8.4px;background:#8a8a8a;"></div>
<div style="left:231.5px;top:393.5px;width:5px;height:1px;background:#8a8a8a;"></div>
<div style="left:245px;top:393.5px;width:5px;height:1px;background:#b0b0b0;"></div>
<div style="left:247px;top:391.5px;width:1px;height:5px;background:#b0b0b0;"></div>
<div style="left:259.3px;top:392px;width:3.6px;height:3.6px;background:#d8d8d8;"></div>
<svg style="left:339.5px;top:390.5px;" width="8" height="7" viewBox="0 0 8 7"><path d="M1.500 5.500C1.500 1.500 6.500 1.500 6.800 5.200" fill="none" stroke="#c4c4c4" stroke-width="1"/><path d="M0 3.500L1.500 6.500L3.500 4Z" fill="#c4c4c4"/></svg>
<svg style="left:352.8px;top:390.5px;" width="8" height="7" viewBox="0 0 8 7"><path d="M6.500 5.500C6.500 1.500 1.500 1.500 1.200 5.200" fill="none" stroke="#c4c4c4" stroke-width="1"/><path d="M8 3.500L6.500 6.500L4.500 4Z" fill="#c4c4c4"/></svg>
<svg style="left:367px;top:390.3px;" width="8" height="8" viewBox="0 0 8 8"><circle cx="4" cy="4.200" r="3.200" fill="none" stroke="#c4c4c4" stroke-width="0.900"/><path d="M4 0.300V4.200" stroke="#c4c4c4" stroke-width="0.900"/><circle cx="4" cy="4.300" r="1" fill="#c4c4c4"/></svg>
<div style="left:379px;top:390.3px;width:7px;height:7.4px;background:#3a3a3a;"></div>
<svg style="left:380.8px;top:391.5px;" width="4" height="5" viewBox="0 0 4 5"><path d="M3 0.500L0.800 2.500L3 4.500" fill="none" stroke="#999" stroke-width="0.900"/></svg>
<div style="left:521.3px;top:391px;width:206.7px;height:6px;background:#3c3c3c;border-radius:3px;"></div>
<div style="left:863px;top:390.3px;width:8px;height:7.4px;background:#3a3a3a;"></div>
<svg style="left:865.2px;top:391.5px;" width="4" height="5" viewBox="0 0 4 5"><path d="M0.800 0.500L3 2.500L0.800 4.500" fill="none" stroke="#999" stroke-width="0.900"/></svg>
<div style="left:0px;top:40.5px;width:158px;height:501px;background:#222222;"></div>
<div style="left:0px;top:52.5px;width:14.5px;height:489px;background:#2b2b2b;"></div>
<div style="left:0px;top:40.5px;width:14.3px;height:12px;background:#383838;"></div>
<svg style="left:6.5px;top:43px;" width="9" height="9" viewBox="0 0 9 9"><path d="M0.500 8.500L1.500 6L7 0.500L8.500 2L3 7.500Z" fill="#c8c8c8"/></svg>
<svg style="left:-2.6px;top:57px;" width="14" height="14" viewBox="0 0 16 16"><circle cx="4" cy="6.500" r="5" fill="none" stroke="#bcbcbc" stroke-width="1.200"/><path d="M7.500 10.500L11.500 15" stroke="#bcbcbc" stroke-width="1.400"/></svg>
<svg style="left:-2.6px;top:75px;" width="14" height="14" viewBox="0 0 16 16"><path d="M1 6V10C1 13 3 15 6 15C8 15 9 13.500 9.500 12L11 8.500L9.500 8L8 10V4.500H6.800V8V3.500H5.500V8V4H4.200V8.500V5.500H3V10L2 8V6Z" fill="#bcbcbc"/></svg>
<svg style="left:-2.6px;top:92.5px;" width="14" height="14" viewBox="0 0 16 16"><path d="M1 4.500L5 3L9 4.500V8L5 9.500L1 8ZM1 4.500L5 6L9 4.500M5 6V9.500" fill="none" stroke="#bcbcbc" stroke-width="0.900"/><path d="M8 8L13.500 10.500L11.200 11.200L12.500 14L11.500 14.500L10.200 11.800L8.500 13.500Z" fill="#bcbcbc"/></svg>
<svg style="left:-2.6px;top:108.5px;" width="14" height="14" viewBox="0 0 16 16"><ellipse cx="5" cy="6.500" rx="6.500" ry="4.500" fill="none" stroke="#bcbcbc" stroke-width="1.100" transform="rotate(-15 5 6.500)"/><path d="M1 10.500C0 12 1.500 14 3.500 13" fill="none" stroke="#bcbcbc" stroke-width="1"/></svg>
<svg style="left:-2.6px;top:125px;" width="14" height="14" viewBox="0 0 16 16"><path d="M5.500 0.500V15M-1.500 7.800H12.500" stroke="#bcbcbc" stroke-width="1.300"/><path d="M3.300 3L5.500 0.500L7.700 3M3.300 12.500L5.500 15L7.700 12.500M10 5.600L12.500 7.800L10 10" fill="none" stroke="#bcbcbc" stroke-width="1.200"/></svg>
<svg style="left:-2.6px;top:141.5px;" width="14" height="14" viewBox="0 0 16 16"><path d="M5.500 1L6.500 5.500L10.500 3L7.800 6.800L12.500 8L7.800 9.200L10.500 13L6.500 10.500L5.500 15L4.500 10.500L0.500 13L3.200 9.200L-1.500 8L3.200 6.800L0.500 3L4.500 5.500Z" fill="#bcbcbc"/></svg>
<div style="left:0px;top:157.5px;width:14px;height:1px;background:#555;"></div>
<svg style="left:-2.6px;top:160px;" width="14" height="14" viewBox="0 0 16 16"><path d="M0.500 14.500L1.500 11.500L7.500 5.500L9.500 7.500L3.500 13.500Z" fill="none" stroke="#bcbcbc" stroke-width="1"/><path d="M7 4L9 2C10 1 11.500 1 12.300 1.800C13 2.500 13 4 12 5L10 7Z" fill="#bcbcbc"/></svg>
<div style="left:0px;top:176.5px;width:10.5px;height:18px;background:#46506b;"></div>
<svg style="left:-2.6px;top:178px;" width="14" height="14" viewBox="0 0 16 16"><path d="M1 13.500L2 9L8 3L11 6L5 12ZM2 9L5 12" fill="none" stroke="#fff" stroke-width="1.100" stroke-linejoin="round"/><path d="M8.500 2.500L10 1L13 4L11.500 5.500Z" fill="#fff"/></svg>
<svg style="left:-2.6px;top:195px;" width="14" height="14" viewBox="0 0 16 16"><path d="M4.500 1.500L5.600 6L10 7L5.600 8L4.500 12.500L3.400 8L-1 7L3.400 6Z" fill="#bcbcbc"/><path d="M11 9.500L11.600 12L14 12.600L11.600 13.200L11 15.500L10.400 13.200L8 12.600L10.400 12Z" fill="#bcbcbc"/></svg>
<svg style="left:-2.6px;top:212.5px;" width="14" height="14" viewBox="0 0 16 16"><path d="M4.500 1.500L5.600 6L10 7L5.600 8L4.500 12.500L3.400 8L-1 7L3.400 6Z" fill="#bcbcbc"/><path d="M11 9.500L11.600 12L14 12.600L11.600 13.200L11 15.500L10.400 13.200L8 12.600L10.400 12Z" fill="#bcbcbc"/></svg>
<svg style="left:-2.6px;top:229.5px;" width="14" height="14" viewBox="0 0 16 16"><path d="M5.500 2L11.500 7.500L5.500 12.500L-0.500 7.500Z" fill="#bcbcbc"/><path d="M-1 14.500H12" stroke="#bcbcbc" stroke-width="1.200"/></svg>
<svg style="left:-2.6px;top:247px;" width="14" height="14" viewBox="0 0 16 16"><path d="M3.500 2C5 5 7 7.500 7 10C7 12 5.500 13.500 3.500 13.500C1.500 13.500 0 12 0 10C0 7.500 2 5 3.500 2Z" fill="#9a9a9a"/><path d="M9.500 4C11 6.500 12.500 8.500 12.500 10.500C12.500 12.300 11.200 13.500 9.500 13.500C7.800 13.500 6.500 12.300 6.500 10.500C6.500 8.500 8 6.500 9.500 4Z" fill="#c8c8c8"/></svg>
<svg style="left:-2.6px;top:263.5px;" width="14" height="14" viewBox="0 0 16 16"><path d="M0.500 4H9V13H0.500ZM0.500 4L3.500 1.500H12V10.500L9 13M9 4L12 1.500M0.500 8.500H9M4.800 4V13" fill="none" stroke="#bcbcbc" stroke-width="1"/></svg>
<svg style="left:-2.6px;top:281px;" width="14" height="14" viewBox="0 0 16 16"><path d="M6 1L13.500 8L6 14.500L-1 8Z" fill="#bcbcbc"/><path d="M6 1L9.500 4.300H2.500Z" fill="#2b2b2b"/></svg>
<div style="left:0px;top:278.5px;width:12px;height:1px;background:#4a4a4a;"></div>
<svg style="left:0px;top:299px;" width="11" height="12" viewBox="0 0 11 12"><defs><linearGradient id="tg1" x1="0" y1="0" x2="0" y2="1"><stop offset="0" stop-color="#eee"/><stop offset="1" stop-color="#444"/></linearGradient></defs><rect x="-1" y="0.500" width="10.500" height="10.500" fill="url(#tg1)" stroke="#bbb" stroke-width="0.900"/></svg>
<svg style="left:-2.6px;top:314.5px;" width="14" height="14" viewBox="0 0 16 16"><path d="M-1 14.500C7 13.500 11.500 8 12.500 0.500" fill="none" stroke="#bcbcbc" stroke-width="1.200"/></svg>
<svg style="left:-2.6px;top:333.5px;" width="14" height="14" viewBox="0 0 16 16"><path d="M-1 2.500H11.500V14.500H-1M-1 7H11.500M5 7V14.500M-1 10.500H5" fill="none" stroke="#bcbcbc" stroke-width="1.100"/></svg>
<svg style="left:-2.6px;top:349.5px;" width="14" height="14" viewBox="0 0 16 16"><path d="M-1 3H13L2 14" fill="none" stroke="#bcbcbc" stroke-width="1.300"/></svg>
<span class="t" style="left:-1.5px;top:364px;font-size:17px;color:#bcbcbc;line-height:21px;font-weight:normal;">A</span>
<svg style="left:-2.6px;top:384px;" width="14" height="14" viewBox="0 0 16 16"><ellipse cx="5.500" cy="6.500" rx="6.500" ry="4.500" fill="none" stroke="#bcbcbc" stroke-width="1.100"/><path d="M1 10L-0.500 13.500L4 11" fill="none" stroke="#bcbcbc" stroke-width="1"/></svg>
<div style="left:0px;top:399.5px;width:14px;height:1px;background:#555;"></div>
<svg style="left:-2.6px;top:400.5px;" width="14" height="14" viewBox="0 0 16 16"><path d="M0 4.500L12.500 6.500L7.500 9L10 13.500L8.500 14.500L6 10L3 13.500Z" fill="#bcbcbc"/></svg>
<div style="left:3px;top:424px;width:13px;height:16px;background:#2a0008;border:1px solid #555;"></div>
<div style="left:-1px;top:416.5px;width:8px;height:15.5px;background:#5ad8ff;border:1px solid #c8d0e8;outline:1px solid #222;"></div>
<div style="left:-3px;top:443.2px;width:14px;height:6.5px;background:#fff;border-radius:3px;background-image:linear-gradient(#fff 50%,transparent 50%),repeating-linear-gradient(90deg,#2a2a2a 0 2.500px,#fff 2.500px 5px);border:1px solid #e4e4e4;"></div>
<div style="left:20.5px;top:45px;width:4.5px;height:1px;background:#555;"></div>
<div style="left:20.5px;top:47px;width:4.5px;height:1px;background:#555;"></div>
<div style="left:20.5px;top:49px;width:4.5px;height:1px;background:#555;"></div>
<div style="left:29.5px;top:42px;width:58px;height:11px;background:#303030;border-radius:1px 1px 0 0;"></div>
<span class="t" style="left:49px;top:43px;font-size:7.8px;color:#bdbdbd;line-height:11px;transform:scaleX(0.839);transform-origin:0 0;">Color Wheel</span>
<svg style="left:35px;top:44px;" width="9" height="9" viewBox="0 0 9 9"><circle cx="4.500" cy="4.500" r="3.900" fill="none" stroke="#ccc" stroke-width="1"/><rect x="2.800" y="2.800" width="3.400" height="3.400" rx="0.800" fill="#ccc"/></svg>
<div style="left:17.5px;top:52.5px;width:130px;height:112.5px;background:#303030;"></div>
<div style="left:33.2px;top:56.2px;width:97.6px;height:97.6px;border-radius:50%;background:conic-gradient(hsl(60,92%,52%) 0deg,hsl(75,92%,50%) 15deg,hsl(90,92%,50%) 30deg,hsl(105,92%,50%) 45deg,hsl(120,92%,50%) 60deg,hsl(135,92%,50%) 75deg,hsl(150,92%,50%) 90deg,hsl(165,92%,50%) 105deg,hsl(180,92%,52%) 120deg,hsl(195,92%,50%) 135deg,hsl(210,92%,50%) 150deg,hsl(225,92%,50%) 165deg,hsl(240,92%,50%) 180deg,hsl(255,92%,50%) 195deg,hsl(270,92%,50%) 210deg,hsl(285,92%,50%) 225deg,hsl(300,92%,52%) 240deg,hsl(315,92%,50%) 255deg,hsl(330,92%,50%) 270deg,hsl(345,92%,50%) 285deg,hsl(0,92%,50%) 300deg,hsl(15,92%,50%) 315deg,hsl(30,92%,50%) 330deg,hsl(45,92%,50%) 345deg,hsl(60,92%,52%) 360deg);-webkit-mask:radial-gradient(circle,transparent 40.600px,#000 41.200px);mask:radial-gradient(circle,transparent 40.600px,#000 41.200px);"></div>
<svg style="left:0px;top:0px;" width="160" height="170" viewBox="0 0 160 170"><defs>
<linearGradient id="trw" x1="63.700" y1="73.600" x2="90.850" y2="120.800" gradientUnits="userSpaceOnUse"><stop offset="0" stop-color="#fff" stop-opacity="1"/><stop offset="1" stop-color="#fff" stop-opacity="0"/></linearGradient>
<linearGradient id="trh" x1="118" y1="105" x2="63.700" y2="105" gradientUnits="userSpaceOnUse"><stop offset="0" stop-color="#10c4f2" stop-opacity="1"/><stop offset="1" stop-color="#10c4f2" stop-opacity="0"/></linearGradient>
</defs>
<g style="isolation:isolate"><polygon points="63.700,73.600 118,105 63.700,136.600" fill="#000"/>
<polygon points="63.700,73.600 118,105 63.700,136.600" fill="url(#trw)" style="mix-blend-mode:plus-lighter"/>
<polygon points="63.700,73.600 118,105 63.700,136.600" fill="url(#trh)" style="mix-blend-mode:plus-lighter"/></g>
<circle cx="96.800" cy="92.600" r="2.300" fill="none" stroke="#222" stroke-width="1.600"/><circle cx="96.800" cy="92.600" r="2.300" fill="none" stroke="#ddd" stroke-width="0.800"/>
<rect x="-2.600" y="-2.600" width="5.200" height="5.200" transform="translate(115.600 136.600) rotate(42)" fill="#3fc4ee" stroke="#fff" stroke-width="1.200"/>
</svg>
<div style="left:26px;top:140px;width:13.5px;height:13.5px;background:#2a0008;border:1px solid #4a4a4a;"></div>
<div style="left:18px;top:133.5px;width:13.5px;height:14.5px;background:#5ad8ff;border:1px solid #b8c0e0;outline:1px solid #2a3350;"></div>
<div style="left:18.5px;top:155px;width:19.5px;height:7px;background:#fff;border-radius:3px;background-image:linear-gradient(#fff 50%,transparent 50%),repeating-linear-gradient(90deg,#2a2a2a 0 2.500px,#fff 2.500px 5px);border:1px solid #e4e4e4;"></div>
<div style="left:63.8px;top:156.8px;width:4.8px;height:5.4px;background:#b8b8b8;border-radius:1px;"></div>
<span class="t" style="left:64.39999999999999px;top:157px;font-size:4.8px;color:#2d2d2d;line-height:7px;font-weight:bold;">H</span>
<span class="t" style="left:72px;top:155px;font-size:8px;color:#b4b4b4;line-height:11px;transform:scaleX(0.847);transform-origin:0 0;">192</span>
<div style="left:86.2px;top:156.8px;width:4.8px;height:5.4px;background:#b8b8b8;border-radius:1px;"></div>
<span class="t" style="left:86.8px;top:157px;font-size:4.8px;color:#2d2d2d;line-height:7px;font-weight:bold;">L</span>
<span class="t" style="left:96.3px;top:155px;font-size:8px;color:#b4b4b4;line-height:11px;transform:scaleX(0.809);transform-origin:0 0;">70</span>
<div style="left:108.2px;top:156.8px;width:4.8px;height:5.4px;background:#b8b8b8;border-radius:1px;"></div>
<span class="t" style="left:108.8px;top:157px;font-size:4.8px;color:#2d2d2d;line-height:7px;font-weight:bold;">S</span>
<span class="t" style="left:115.8px;top:155px;font-size:8px;color:#b4b4b4;line-height:11px;transform:scaleX(0.847);transform-origin:0 0;">100</span>
<svg style="left:133.5px;top:151.5px;" width="11" height="11" viewBox="0 0 11 11"><circle cx="5.500" cy="5.500" r="4.700" fill="none" stroke="#aaa" stroke-width="1"/><rect x="3" y="3" width="5" height="5" rx="0.800" fill="none" stroke="#aaa" stroke-width="1"/></svg>
<div style="left:20.5px;top:172.5px;width:4.5px;height:1px;background:#555;"></div>
<div style="left:20.5px;top:174.5px;width:4.5px;height:1px;background:#555;"></div>
<div style="left:20.5px;top:176.5px;width:4.5px;height:1px;background:#555;"></div>
<div style="left:29.5px;top:169.8px;width:79px;height:10.2px;background:#303030;border-radius:1px 1px 0 0;"></div>
<span class="t" style="left:49px;top:170px;font-size:7.8px;color:#bdbdbd;line-height:11px;transform:scaleX(0.837);transform-origin:0 0;">Tool property: pixel</span>
<svg style="left:34px;top:170.8px;" width="11" height="10" viewBox="0 0 11 10"><path d="M1 8.500L2 5.500L7.500 0.500L9.500 2.500L4 8Z" fill="#c8c8c8"/><circle cx="7.500" cy="7.500" r="1.800" fill="none" stroke="#c8c8c8" stroke-width="0.900"/></svg>
<div style="left:17.5px;top:180px;width:130px;height:112px;background:#303030;"></div>
<div style="left:17.5px;top:209px;width:130px;height:69px;background:#232323;"></div>
<div style="left:17.5px;top:182.5px;width:64.5px;height:26.3px;background:#b3b3b3;"></div>
<div style="left:82px;top:182.5px;width:65.5px;height:26.3px;background:#2a2a2a;"></div>
<svg style="left:17.5px;top:182.3px;overflow:hidden" width="130" height="26.5" viewBox="0 0 130 26.5"><path d="M5.75 9.7C15 5 24 1.500 34 1.300C44 1 54 1 64 1.800C74 4 80 11.500 88 11.500C96 11.500 106 3 115 0.800L123.750 0.200V15.200C116 19 108 23 100 25.200C93 26.500 88 26.500 82.500 25.700C76 24 70 21.500 65 20.200C58 17 52 15 45 15.200C38 15.500 33 16.500 27.500 18.200C20 20.500 12 24 5.750 26.450Z" fill="#60daff"/><path d="M119.500 20.500H123V18.500C123 17.300 120.500 17.300 120.500 18.500" fill="none" stroke="#aaa" stroke-width="0.800"/><rect x="119" y="20.300" width="4.500" height="3.700" fill="#b8b8b8"/></svg>
<div style="left:18px;top:183.5px;width:17.5px;height:8.5px;background:rgba(120,120,120,0.78);"></div>
<span class="t" style="left:19px;top:182px;font-size:7.5px;color:#dedede;line-height:11px;transform:scaleX(0.940);transform-origin:0 0;">pixel</span>
<span class="t" style="left:28px;top:211px;font-size:8px;color:#c4c4c4;line-height:11px;transform:scaleX(0.892);transform-origin:0 0;">Brush Size</span>
<div style="left:43px;top:221.8px;width:44px;height:4.4px;background:#262626;border:1px solid #4c4c4c;"></div>
<div style="left:43.5px;top:222.3px;width:29px;height:3.4px;background:#3e3e3e;"></div>
<span class="t" style="left:101.93px;top:215px;font-size:8px;color:#c4c4c4;line-height:11px;transform:scaleX(0.867);transform-origin:100% 0;">90.6</span>
<svg style="left:118.5px;top:215.5px;" width="6" height="9" viewBox="0 0 6 9"><path d="M0.500 3.200L3 0.700L5.500 3.200M0.500 5.800L3 8.300L5.500 5.800" fill="none" stroke="#bbb" stroke-width="0.900"/></svg>
<div style="left:127px;top:212px;width:9.5px;height:15.5px;background:#2b2b2b;border:1px solid #484848;"></div>
<svg style="left:128.8px;top:216.5px;" width="6" height="6" viewBox="0 0 6 6"><rect x="0.500" y="0.500" width="5" height="5" fill="none" stroke="#d0d0d0" stroke-width="1"/><path d="M1 5L5 1" stroke="#d0d0d0" stroke-width="1"/></svg>
<div style="left:23px;top:228.3px;width:114px;height:1px;background:#3a3a3a;"></div>
<span class="t" style="left:28px;top:230px;font-size:8px;color:#c4c4c4;line-height:11px;transform:scaleX(0.903);transform-origin:0 0;">Opacity</span>
<div style="left:43px;top:240.3px;width:44px;height:4.4px;background:#262626;border:1px solid #4c4c4c;"></div>
<div style="left:43.5px;top:240.8px;width:43px;height:3.4px;background:#3e3e3e;"></div>
<span class="t" style="left:103.65px;top:233px;font-size:8px;color:#c4c4c4;line-height:11px;transform:scaleX(0.862);transform-origin:100% 0;">100</span>
<svg style="left:118.5px;top:233.8px;" width="6" height="9" viewBox="0 0 6 9"><path d="M0.500 3.200L3 0.700L5.500 3.200M0.500 5.800L3 8.300L5.500 5.800" fill="none" stroke="#bbb" stroke-width="0.900"/></svg>
<div style="left:127px;top:230.5px;width:9.5px;height:15.5px;background:#2b2b2b;border:1px solid #484848;"></div>
<svg style="left:128.8px;top:235.0px;" width="6" height="6" viewBox="0 0 6 6"><rect x="0.500" y="0.500" width="5" height="5" fill="none" stroke="#d0d0d0" stroke-width="1"/><path d="M1 5L5 1" stroke="#d0d0d0" stroke-width="1"/></svg>
<div style="left:23px;top:246.5px;width:114px;height:1px;background:#3a3a3a;"></div>
<span class="t" style="left:28px;top:251px;font-size:8px;color:#c4c4c4;line-height:11px;transform:scaleX(0.918);transform-origin:0 0;">Anti-aliasing</span>
<div style="left:69.5px;top:248.8px;width:67px;height:16.5px;background:#2b2b2b;border:1px solid #484848;"></div>
<div style="left:70px;top:249.3px;width:14.5px;height:15.5px;background:#6878ad;"></div>
<svg style="left:70px;top:249.3px;" width="58" height="15.5" viewBox="0 0 58 15.5"><defs><radialGradient id="aa3"><stop offset="0.550" stop-color="#c4c4c4"/><stop offset="1" stop-color="#c4c4c4" stop-opacity="0.250"/></radialGradient><radialGradient id="aa4"><stop offset="0.300" stop-color="#c4c4c4"/><stop offset="1" stop-color="#c4c4c4" stop-opacity="0.050"/></radialGradient></defs>
<path d="M5.500 3.500H9V4.500H10.500V6H11.500V9.500H10.500V11H9V12H5.500V11H4V9.500H3V6H4V4.500H5.500Z" fill="#d4d4d4"/>
<circle cx="21.500" cy="7.800" r="4.600" fill="#c8c8c8"/><circle cx="35.800" cy="7.800" r="4.900" fill="url(#aa3)"/><circle cx="50" cy="7.800" r="5.400" fill="url(#aa4)"/></svg>
<svg style="left:129.5px;top:254.5px;" width="6" height="5" viewBox="0 0 6 5"><path d="M0.500 0.800L3 3.500L5.500 0.800" fill="none" stroke="#ccc" stroke-width="1"/></svg>
<div style="left:23px;top:265.8px;width:114px;height:1px;background:#3a3a3a;"></div>
<span class="t" style="left:28px;top:267px;font-size:8px;color:#c4c4c4;line-height:11px;transform:scaleX(0.916);transform-origin:0 0;">Stabilization</span>
<div style="left:43px;top:277px;width:14px;height:1.5px;background:#4c4c4c;"></div>
<span class="t" style="left:113.5px;top:271px;font-size:8px;color:#c4c4c4;line-height:11px;">2</span>
<svg style="left:118.5px;top:271.5px;" width="6" height="5" viewBox="0 0 6 5"><path d="M0.500 3.200L3 0.700L5.500 3.200" fill="none" stroke="#bbb" stroke-width="0.900"/></svg>
<div style="left:139.5px;top:210.5px;width:8px;height:67.5px;background:#262626;"></div>
<div style="left:140px;top:211px;width:7px;height:7px;background:#3a3a3a;"></div>
<svg style="left:141.2px;top:213px;" width="5" height="4" viewBox="0 0 5 4"><path d="M0.500 3L2.500 0.800L4.500 3" fill="none" stroke="#999" stroke-width="0.900"/></svg>
<div style="left:140.5px;top:219.5px;width:6px;height:30.5px;background:#454545;border-radius:3px;"></div>
<div style="left:140px;top:270px;width:7px;height:7px;background:#3a3a3a;"></div>
<svg style="left:141.2px;top:272px;" width="5" height="4" viewBox="0 0 5 4"><path d="M0.500 0.800L2.500 3L4.500 0.800" fill="none" stroke="#999" stroke-width="0.900"/></svg>
<div style="left:17.5px;top:278px;width:130px;height:14px;background:#303030;border-top:1px solid #1e1e1e;"></div>
<svg style="left:122px;top:280.5px;" width="10" height="10" viewBox="0 0 10 10"><circle cx="5" cy="5.300" r="4.200" fill="none" stroke="#d0d0d0" stroke-width="1"/><path d="M5 0V5.300" stroke="#d0d0d0" stroke-width="1"/><circle cx="5" cy="5.500" r="1.300" fill="#d0d0d0"/></svg>
<svg style="left:135px;top:280.5px;" width="11" height="11" viewBox="0 0 11 11"><path d="M3.300 0.800A2.800 2.800 0 0 1 6.600 4.400L10.300 8.100L8.600 9.800L4.900 6.100A2.800 2.800 0 0 1 1.200 2.900L3 4.500L4.700 2.700Z" fill="none" stroke="#d0d0d0" stroke-width="1" stroke-linejoin="round"/></svg>
<div style="left:20.5px;top:299px;width:4.5px;height:1px;background:#555;"></div>
<div style="left:20.5px;top:301px;width:4.5px;height:1px;background:#555;"></div>
<div style="left:20.5px;top:303px;width:4.5px;height:1px;background:#555;"></div>
<div style="left:29.5px;top:296.3px;width:68px;height:10.5px;background:#303030;border-radius:1px 1px 0 0;"></div>
<span class="t" style="left:49px;top:297px;font-size:7.8px;color:#bdbdbd;line-height:11px;transform:scaleX(0.787);transform-origin:0 0;">Sub Tool: Pen 2</span>
<svg style="left:34px;top:297px;" width="11" height="10" viewBox="0 0 11 10"><path d="M1 8.500L2 5.500L7.500 0.500L9.500 2.500L4 8Z" fill="#c8c8c8"/><path d="M6 6.500H10.500M6 8.200H10.500M6 9.800H10.500" stroke="#c8c8c8" stroke-width="0.800"/></svg>
<div style="left:17.5px;top:306.5px;width:130px;height:235px;background:#303030;"></div>
<div style="left:18px;top:310.1px;width:41.5px;height:16.8px;background:#46506b;border:1px solid #46506b;"></div>
<div style="left:19.5px;top:312.1px;width:12.5px;height:12.5px;background:#1cc8ea;"></div>
<svg style="left:19.5px;top:312.1px;" width="12.5" height="12.5" viewBox="0 0 12.5 12.5"><path d="M1.500 11.500L3 7L8 1.500L11 4L6 10Z M3 7L6 10" fill="none" stroke="#1a2a3a" stroke-width="1" stroke-linejoin="round"/><path d="M7.500 1.500L9 0.500L12 3L11 4.500Z" fill="#1a2a3a"/></svg>
<span class="t" style="left:35.9px;top:312px;font-size:8.5px;color:#dedede;line-height:12px;transform:scaleX(0.889);transform-origin:0 0;">Marker</span>
<div style="left:61px;top:310.1px;width:41.5px;height:16.8px;background:#323232;border:1px solid #262626;"></div>
<svg style="left:62.5px;top:312.1px;" width="13" height="13" viewBox="0 0 13 13"><path d="M4 0.500C5.500 4 8 6.500 8 9C8 11.500 6.200 13 4 13C1.800 13 0 11.500 0 9C0 6.500 2.500 4 4 0.500Z" fill="#8c8c8c"/><path d="M9.500 2.500C10.800 5 13 7.500 13 9.500C13 11.600 11.500 13 9.500 13C7.500 13 6 11.600 6 9.500C6 7.500 8.200 5 9.500 2.500Z" fill="#c0c0c0"/></svg>
<span class="t" style="left:78.9px;top:312px;font-size:8.5px;color:#cccccc;line-height:12px;transform:scaleX(0.897);transform-origin:0 0;">Blend</span>
<div style="left:104px;top:310.1px;width:41.5px;height:16.8px;background:#323232;border:1px solid #262626;"></div>
<div style="left:105.5px;top:312.1px;width:12.5px;height:12.5px;background:#40dcb8;"></div>
<svg style="left:105.5px;top:312.1px;" width="12.5" height="12.5" viewBox="0 0 12.5 12.5"><path d="M1.500 11.500L3 7L8 1.500L11 4L6 10Z M3 7L6 10" fill="none" stroke="#1a2a3a" stroke-width="1" stroke-linejoin="round"/><path d="M7.500 1.500L9 0.500L12 3L11 4.500Z" fill="#1a2a3a"/></svg>
<span class="t" style="left:121.9px;top:312px;font-size:8.5px;color:#cccccc;line-height:12px;transform:scaleX(0.874);transform-origin:0 0;">ink</span>
<div style="left:18px;top:328.1px;width:41.5px;height:16.8px;background:#323232;border:1px solid #262626;"></div>
<svg style="left:19.5px;top:330.1px;" width="13" height="14" viewBox="0 0 13 14"><path d="M1.500 12.500L3 8L8.500 2L11.500 5L6 11Z M3 8L6 11" fill="none" stroke="#ddd" stroke-width="1" stroke-linejoin="round"/><path d="M8 2L9.500 0.500L13 3.500L11.500 5Z" fill="#ddd"/><path d="M0 13.500H5" stroke="#ddd" stroke-width="0.800"/></svg>
<span class="t" style="left:35.9px;top:330px;font-size:8.5px;color:#cccccc;line-height:12px;transform:scaleX(0.859);transform-origin:0 0;">effects</span>
<div style="left:17.5px;top:346.7px;width:120.5px;height:15.300000000000011px;background:#46506b;"></div>
<div style="left:17.5px;top:362.0px;width:120.5px;height:1px;background:#1d1d1d;"></div>
<div style="left:17.5px;top:363px;width:120.5px;height:16px;background:#2b2b2b;"></div>
<div style="left:17.5px;top:379px;width:120.5px;height:1px;background:#1d1d1d;"></div>
<div style="left:17.5px;top:380px;width:120.5px;height:15.399999999999977px;background:#2b2b2b;"></div>
<div style="left:17.5px;top:395.4px;width:120.5px;height:1px;background:#1d1d1d;"></div>
<div style="left:17.5px;top:396.4px;width:120.5px;height:15.600000000000023px;background:#2b2b2b;"></div>
<div style="left:17.5px;top:412.0px;width:120.5px;height:1px;background:#1d1d1d;"></div>
<div style="left:17.5px;top:413px;width:120.5px;height:15.199999999999989px;background:#2b2b2b;"></div>
<div style="left:17.5px;top:428.2px;width:120.5px;height:1px;background:#1d1d1d;"></div>
<div style="left:17.5px;top:429.2px;width:120.5px;height:15.100000000000023px;background:#2b2b2b;"></div>
<div style="left:17.5px;top:444.3px;width:120.5px;height:1px;background:#1d1d1d;"></div>
<div style="left:17.5px;top:445.3px;width:120.5px;height:15.199999999999989px;background:#2b2b2b;"></div>
<div style="left:17.5px;top:460.5px;width:120.5px;height:1px;background:#1d1d1d;"></div>
<div style="left:17.5px;top:461.5px;width:120.5px;height:15.199999999999989px;background:#2b2b2b;"></div>
<div style="left:17.5px;top:476.7px;width:120.5px;height:1px;background:#1d1d1d;"></div>
<div style="left:17.5px;top:477.7px;width:120.5px;height:15.300000000000011px;background:#2b2b2b;"></div>
<div style="left:17.5px;top:493.0px;width:120.5px;height:1px;background:#1d1d1d;"></div>
<div style="left:17.5px;top:494px;width:120.5px;height:15.5px;background:#2b2b2b;"></div>
<div style="left:17.5px;top:509.5px;width:120.5px;height:1px;background:#1d1d1d;"></div>
<div style="left:17.5px;top:510.5px;width:120.5px;height:15.700000000000045px;background:#2b2b2b;"></div>
<div style="left:17.5px;top:526.2px;width:120.5px;height:1px;background:#1d1d1d;"></div>
<div style="left:17.5px;top:527.2px;width:120.5px;height:9.5px;background:#2b2b2b;"></div>
<div style="left:17.5px;top:536.7px;width:120.5px;height:1px;background:#1d1d1d;"></div>
<svg style="left:0;top:0" width="160" height="541" viewBox="0 0 160 541"><defs><filter id="bl1"><feGaussianBlur stdDeviation="0.700"/></filter><filter id="bl2"><feGaussianBlur stdDeviation="1.200"/></filter><linearGradient id="fdw" x1="0" y1="0" x2="1" y2="0"><stop offset="0" stop-color="#fff" stop-opacity="0"/><stop offset="0.300" stop-color="#fff" stop-opacity="1"/><stop offset="0.700" stop-color="#fff" stop-opacity="1"/><stop offset="1" stop-color="#fff" stop-opacity="0"/></linearGradient><linearGradient id="fdk" x1="0" y1="0" x2="1" y2="0"><stop offset="0" stop-color="#080808" stop-opacity="0"/><stop offset="0.300" stop-color="#080808" stop-opacity="1"/><stop offset="0.700" stop-color="#080808" stop-opacity="1"/><stop offset="1" stop-color="#080808" stop-opacity="0"/></linearGradient><clipPath id="blc"><rect x="17.500" y="346" width="120.500" height="190.700"/></clipPath></defs><g clip-path="url(#blc)">
<path d="M22.5 357C38.0 350.4 49.625 350.4 61.25 354.9C72.875 359.4 84.5 355.5 100 349.5" fill="none" stroke="#fff" stroke-width="10" stroke-linecap="butt" opacity="1"/>
<path d="M27 406.5C40.6 401.0 50.8 401.0 61.0 404.75C71.2 408.5 81.4 405.25 95 400.25" fill="none" stroke="#fff" stroke-width="5" stroke-linecap="round" opacity="1" filter="url(#bl1)"/>
<path d="M26 423.5C40.4 416.9 51.2 416.9 62.0 421.4C72.80000000000001 425.9 83.6 422.0 98 416.0" fill="none" stroke="#fff" stroke-width="6" stroke-linecap="round" opacity="1"/>
<path d="M28 438.5C37.2 435.2 44.099999999999994 435.2 51.0 437.45C57.900000000000006 439.7 64.80000000000001 437.75 74 434.75" fill="none" stroke="url(#fdw)" stroke-width="2.2" stroke-linecap="round" opacity="0.6" filter="url(#bl1)"/>
<path d="M26 456.0C38.8 450.5 48.4 450.5 58.0 454.25C67.6 458.0 77.2 454.75 90 449.75" fill="none" stroke="url(#fdk)" stroke-width="4.5" stroke-linecap="round" opacity="1"/>
<path d="M38 456.0C47.6 450.5 54.8 450.5 62.0 454.25C69.2 458.0 76.4 454.75 86 449.75" fill="none" stroke="url(#fdw)" stroke-width="1.3" stroke-linecap="round" opacity="1"/>
<path d="M32 471.5C42.0 467.1 49.5 467.1 57.0 470.1C64.5 473.1 72.0 470.5 82 466.5" fill="none" stroke="url(#fdw)" stroke-width="3.2" stroke-linecap="round" opacity="0.9" filter="url(#bl1)"/>
<path d="M28 488.5C40.4 483.0 49.7 483.0 59.0 486.75C68.30000000000001 490.5 77.6 487.25 90 482.25" fill="none" stroke="url(#fdk)" stroke-width="6" stroke-linecap="round" opacity="0.9" filter="url(#bl1)"/>
<path d="M22 505.0C36.8 499.5 47.9 499.5 59.0 503.25C70.1 507.0 81.2 503.75 96 498.75" fill="none" stroke="url(#fdw)" stroke-width="4" stroke-linecap="round" opacity="0.95" filter="url(#bl1)"/>
<path d="M36 521C45.6 516.6 52.8 516.6 60.0 519.6C67.2 522.6 74.4 520.0 84 516.0" fill="none" stroke="url(#fdw)" stroke-width="3.2" stroke-linecap="round" opacity="0.95" filter="url(#bl1)"/>
<path d="M28 536.5C38.8 532.1 46.9 532.1 55.0 535.1C63.1 538.1 71.2 535.5 82 531.5" fill="none" stroke="url(#fdw)" stroke-width="3.5" stroke-linecap="round" opacity="0.95" filter="url(#bl1)"/>
</g></svg>
<svg style="left:21px;top:364.5px;" width="12" height="13" viewBox="0 0 12 13"><path d="M6 0L8 2.500L7.500 4L9.500 5L9 7L11 8.500L10.500 10.500H1.500L1 8.500L3 7L2.500 5L4.500 4L4 2.500Z" fill="#3ec8f0"/><rect x="1" y="10.500" width="10" height="2.500" fill="#f4f4f4"/><path d="M4 6L8 8.500M4 8.500L7 5" stroke="#fff" stroke-width="0.900"/></svg>
<svg style="left:21px;top:381.5px;" width="12" height="13" viewBox="0 0 12 13"><path d="M6 0L8 2.500L7.500 4L9.500 5L9 7L11 8.500L10.500 10.500H1.500L1 8.500L3 7L2.500 5L4.500 4L4 2.500Z" fill="#3ec8f0"/><rect x="1" y="10.500" width="10" height="2.500" fill="#f0d840"/><path d="M4 6L8 8.500M4 8.500L7 5" stroke="#fff" stroke-width="0.900"/></svg>
<div style="left:120px;top:351.7px;width:18px;height:11px;background:#56607c;"></div>
<span class="t" style="left:120.05px;top:352px;font-size:8px;color:#e6e6e6;line-height:11px;transform:scaleX(0.942);transform-origin:100% 0;">pixel</span>
<span class="t" style="left:17.99px;top:367px;font-size:8.3px;color:#d4d4d4;line-height:12px;transform:scaleX(0.852);transform-origin:100% 0;">隙間無く囲って消すツール 参照</span>
<span class="t" style="left:17.99px;top:384px;font-size:8.3px;color:#d4d4d4;line-height:12px;transform:scaleX(0.852);transform-origin:100% 0;">隙間無く囲って塗るツール 参照</span>
<span class="t" style="left:105.38px;top:401px;font-size:8px;color:#d4d4d4;line-height:11px;transform:scaleX(0.948);transform-origin:100% 0;">Like Milk</span>
<span class="t" style="left:107.16px;top:417px;font-size:8px;color:#d4d4d4;line-height:11px;transform:scaleX(0.937);transform-origin:100% 0;">Milli pen</span>
<span class="t" style="left:42.89px;top:433px;font-size:8.3px;color:#d4d4d4;line-height:12px;transform:scaleX(0.748);transform-origin:100% 0;">お絵描き 平ぶらしチャン</span>
<span class="t" style="left:78.4px;top:449px;font-size:8.3px;color:#d4d4d4;line-height:12px;transform:scaleX(0.818);transform-origin:100% 0;">逆光ブラシ　改</span>
<span class="t" style="left:74.49px;top:466px;font-size:8px;color:#d4d4d4;line-height:11px;transform:scaleX(0.911);transform-origin:100% 0;">Eevee&#39;s Soft Line</span>
<span class="t" style="left:88.02px;top:482px;font-size:8px;color:#d4d4d4;line-height:11px;transform:scaleX(0.908);transform-origin:100% 0;">Pinceau Juno</span>
<span class="t" style="left:86.7px;top:498px;font-size:8.3px;color:#d4d4d4;line-height:12px;transform:scaleX(0.823);transform-origin:100% 0;">濃厚マーカー</span>
<span class="t" style="left:86.7px;top:514px;font-size:8.3px;color:#d4d4d4;line-height:12px;transform:scaleX(0.793);transform-origin:100% 0;">じゅわ墨ペン</span>
<span class="t" style="left:96.84px;top:531px;font-size:8.3px;color:#d4d4d4;line-height:12px;transform:scaleX(0.555);transform-origin:100% 0;">〃〃〃ﾉ 斌</span>
<div style="left:139.5px;top:346.7px;width:8px;height:190px;background:#262626;"></div>
<div style="left:140px;top:347.5px;width:7px;height:7.5px;background:#3a3a3a;"></div>
<svg style="left:141.2px;top:349.5px;" width="5" height="4" viewBox="0 0 5 4"><path d="M0.500 3L2.500 0.800L4.500 3" fill="none" stroke="#999" stroke-width="0.900"/></svg>
<div style="left:140.5px;top:363px;width:6px;height:137px;background:#454545;border-radius:3px;"></div>
<div style="left:140px;top:528.3px;width:7px;height:7.5px;background:#3a3a3a;"></div>
<svg style="left:141.2px;top:530.3px;" width="5" height="4" viewBox="0 0 5 4"><path d="M0.500 0.800L2.500 3L4.500 0.800" fill="none" stroke="#999" stroke-width="0.900"/></svg>
<div style="left:17.5px;top:536.7px;width:130px;height:5px;background:#303030;border-top:1px solid #1e1e1e;"></div>
<div style="left:879px;top:41.5px;width:145px;height:500px;background:#232323;"></div>
<div style="left:882.3px;top:41.3px;width:22.5px;height:21.3px;background:#303030;border-radius:1px;"></div>
<div style="left:882.3px;top:66.58px;width:22.5px;height:21.3px;background:#303030;border-radius:1px;"></div>
<div style="left:882.3px;top:91.86px;width:22.5px;height:21.3px;background:#303030;border-radius:1px;"></div>
<div style="left:882.3px;top:117.14px;width:22.5px;height:21.3px;background:#303030;border-radius:1px;"></div>
<div style="left:882.3px;top:142.42000000000002px;width:22.5px;height:21.3px;background:#303030;border-radius:1px;"></div>
<div style="left:882.3px;top:167.7px;width:22.5px;height:21.3px;background:#303030;border-radius:1px;"></div>
<div style="left:882.3px;top:192.98000000000002px;width:22.5px;height:21.3px;background:#303030;border-radius:1px;"></div>
<div style="left:882.3px;top:218.26px;width:22.5px;height:21.3px;background:#303030;border-radius:1px;"></div>
<div style="left:882.3px;top:243.54000000000002px;width:22.5px;height:21.3px;background:#303030;border-radius:1px;"></div>
<svg style="left:886.7px;top:45.599999999999994px;" width="14" height="13" viewBox="0 0 14 13"><g transform="scale(1.130 1.050)"><circle cx="6" cy="6" r="5.200" fill="none" stroke="#b8b8b8" stroke-width="1.300"/><path d="M3.500 3.500L9.500 9.500M3.500 3.500H7M3.500 3.500V7" stroke="#b8b8b8" stroke-width="1.400" fill="none"/></g></svg>
<svg style="left:886.7px;top:70.88px;" width="14" height="13" viewBox="0 0 14 13"><g transform="scale(1.130 1.050)"><path d="M0.600 2V11.400H11.400V2.800H5.500L4.500 1H0.600Z" fill="none" stroke="#b8b8b8" stroke-width="1.100" stroke-linejoin="round"/><rect x="3.300" y="5" width="5.500" height="5" fill="none" stroke="#b8b8b8" stroke-width="0.900"/><rect x="4.800" y="7.500" width="2.500" height="2.500" fill="#b8b8b8"/></g></svg>
<svg style="left:886.7px;top:96.16px;" width="14" height="13" viewBox="0 0 14 13"><g transform="scale(1.130 1.050)"><path d="M0.600 2V11.400H11.400V2.800H5.500L4.500 1H0.600Z" fill="none" stroke="#b8b8b8" stroke-width="1.100" stroke-linejoin="round"/><path d="M6 4.200L6.900 6.300L9.200 6.500L7.500 8L8 10.200L6 9L4 10.200L4.500 8L2.800 6.500L5.100 6.300Z" fill="#b8b8b8"/></g></svg>
<svg style="left:886.7px;top:121.44px;" width="14" height="13" viewBox="0 0 14 13"><g transform="scale(1.130 1.050)"><path d="M0.600 2V11.400H11.400V2.800H5.500L4.500 1H0.600Z" fill="none" stroke="#b8b8b8" stroke-width="1.100" stroke-linejoin="round"/><rect x="3" y="4.800" width="6" height="5.200" fill="#b8b8b8" opacity="0.700"/><path d="M3 6.500H9M3 8.200H9M5 4.800V10M7 4.800V10" stroke="#2d2d2d" stroke-width="0.600"/></g></svg>
<svg style="left:886.7px;top:146.72000000000003px;" width="14" height="13" viewBox="0 0 14 13"><g transform="scale(1.130 1.050)"><path d="M0.600 2V11.400H11.400V2.800H5.500L4.500 1H0.600Z" fill="none" stroke="#b8b8b8" stroke-width="1.100" stroke-linejoin="round"/><path d="M6 4.200V8.500M4.200 7L6 8.800L7.800 7M3.500 10H8.500" stroke="#b8b8b8" stroke-width="1" fill="none"/></g></svg>
<svg style="left:886.7px;top:172.0px;" width="14" height="13" viewBox="0 0 14 13"><g transform="scale(1.130 1.050)"><path d="M0.600 2V11.400H11.400V2.800H5.500L4.500 1H0.600Z" fill="none" stroke="#b8b8b8" stroke-width="1.100" stroke-linejoin="round"/><path d="M3 4L9 10.500M9 4L3 10.500" stroke="#b8b8b8" stroke-width="1.800"/></g></svg>
<svg style="left:886.7px;top:197.28000000000003px;" width="14" height="13" viewBox="0 0 14 13"><g transform="scale(1.130 1.050)"><path d="M0.600 2V11.400H11.400V2.800H5.500L4.500 1H0.600Z" fill="none" stroke="#b8b8b8" stroke-width="1.100" stroke-linejoin="round"/><path d="M6 4.200V8.500M4.200 7L6 8.800L7.800 7M3.500 10H8.500" stroke="#b8b8b8" stroke-width="1" fill="none"/></g></svg>
<svg style="left:886.7px;top:222.56px;" width="14" height="13" viewBox="0 0 14 13"><g transform="scale(1.130 1.050)"><path d="M0.600 2V11.400H11.400V2.800H5.500L4.500 1H0.600Z" fill="none" stroke="#b8b8b8" stroke-width="1.100" stroke-linejoin="round"/><circle cx="6" cy="7.200" r="2.600" fill="none" stroke="#b8b8b8" stroke-width="0.900"/><path d="M6 8.500V6M5 7L6 6L7 7" stroke="#b8b8b8" stroke-width="0.800" fill="none"/></g></svg>
<svg style="left:886.7px;top:247.84000000000003px;" width="14" height="13" viewBox="0 0 14 13"><g transform="scale(1.130 1.050)"><path d="M0.600 2V11.400H11.400V2.800H5.500L4.500 1H0.600Z" fill="none" stroke="#b8b8b8" stroke-width="1.100" stroke-linejoin="round"/><circle cx="6" cy="4.800" r="0.900" fill="#b8b8b8"/><path d="M3.800 6H8.200M6 6V8.200M6 8.200L4.500 10.500M6 8.200L7.500 10.500" stroke="#b8b8b8" stroke-width="0.900" fill="none"/></g></svg>
<div style="left:921.5px;top:45.5px;width:4.5px;height:1px;background:#555;"></div>
<div style="left:921.5px;top:47.5px;width:4.5px;height:1px;background:#555;"></div>
<div style="left:921.5px;top:49.5px;width:4.5px;height:1px;background:#555;"></div>
<div style="left:931.5px;top:42.5px;width:36px;height:10.5px;background:#303030;"></div>
<svg style="left:935px;top:44.5px;" width="10" height="8" viewBox="0 0 10 8"><path d="M2.500 2.500V1H9.500V6H8" fill="none" stroke="#c4c4c4" stroke-width="0.900"/><rect x="0.500" y="2.500" width="7.500" height="5" fill="#c4c4c4"/></svg>
<span class="t" style="left:949px;top:43px;line-height:11px;font-size:7.6px;color:#bdbdbd;width:17.500px;overflow:hidden;-webkit-mask:linear-gradient(90deg,#000 60%,transparent 100%);mask:linear-gradient(90deg,#000 60%,transparent 100%)">Navigator</span>
<div style="left:969px;top:43.5px;width:20.5px;height:9.5px;background:#2a2a2a;"></div>
<svg style="left:974.5px;top:44px;" width="10" height="10" viewBox="0 0 10 10"><circle cx="5" cy="5.500" r="4.300" fill="none" stroke="#9a9a9a" stroke-width="0.900"/><path d="M5 4.500V8M5 2.600V3.600" stroke="#9a9a9a" stroke-width="1"/></svg>
<div style="left:991px;top:43.5px;width:20.5px;height:9.5px;background:#2a2a2a;"></div>
<svg style="left:995px;top:44.5px;" width="12" height="9" viewBox="0 0 12 9"><path d="M0.500 9V1H4L5 2.500H11.500V9" fill="none" stroke="#9a9a9a" stroke-width="0.900"/><path d="M3 9V5H9V9" fill="none" stroke="#9a9a9a" stroke-width="0.900"/></svg>
<div style="left:1013px;top:43.5px;width:11px;height:9.5px;background:#2a2a2a;"></div>
<svg style="left:1017px;top:45px;" width="8" height="8" viewBox="0 0 8 8"><path d="M1 2H8M1 5H8M0 0.500V3.500M3 3.500V6.500" stroke="#9a9a9a" stroke-width="0.900"/></svg>
<div style="left:918px;top:52.5px;width:106px;height:2px;background:#303030;"></div>
<div style="left:918px;top:54.5px;width:106px;height:105.5px;background:#1b1b1b;"></div>
<div style="left:918px;top:74.5px;width:106px;height:66px;background:#fff;border-top:1px solid #d01818;border-bottom:1.200px solid #c81414;"></div>
<svg style="left:918px;top:75.5px;overflow:hidden" width="106" height="64.5" viewBox="0 0 106 64.5"><g transform="translate(-2 -0.800) scale(0.2135) translate(-243.300 -73.300)"><g transform="translate(320 275) scale(0.14778)" stroke-linejoin="round"><path d="M255 55L335 105L292 182L272 250L240 352L178 332L190 200L230 130Z" fill="#b48c8e" stroke="#1d2440" stroke-width="7"/><path d="M318 72L415 70L440 150L490 260L532 352L490 402L440 330L390 270L375 170L342 110Z" fill="#a8d0f0" stroke="#1d2440" stroke-width="7"/><path d="M140 402L160 380L175 335L240 356L255 386L310 400L316 430L290 456L160 456L140 430Z" fill="#6a88e2" stroke="#27449a" stroke-width="8"/><path d="M165 392L215 388L225 415L170 415Z" fill="#f0c8cc"/><path d="M215 368L250 380L255 408L225 405Z" fill="#c8ac58"/><path d="M150 432H305" stroke="#2f56b4" stroke-width="6"/><path d="M490 402L532 350L600 346L640 320L670 336L680 376L650 416L560 470L520 470L495 440Z" fill="#6a88e2" stroke="#27449a" stroke-width="8"/><path d="M505 425L548 410L555 430L512 448Z" fill="#f0d4d8"/><path d="M535 356L580 352L585 385L545 392Z" fill="#c8ac58"/><path d="M515 458L665 372" stroke="#2f56b4" stroke-width="6"/></g><g transform="translate(310 215) scale(0.14790)" stroke-linejoin="round"><path d="M360 75C300 90 200 130 150 160C110 182 80 198 68 212C55 232 75 262 100 270C150 290 210 285 250 265C290 240 330 180 360 75Z" fill="url(#wingg)" stroke="#86b9ec" stroke-width="7"/><path d="M250 205C270 195 295 210 290 240C285 262 262 268 245 258" fill="none" stroke="#86b9ec" stroke-width="6"/><path d="M545 100C585 135 640 190 665 218C690 245 695 268 680 276C660 284 625 268 590 240C570 222 555 190 545 100Z" fill="url(#wingg)" stroke="#86b9ec" stroke-width="7"/><path d="M240 398L270 430L330 466L400 482L480 492L582 480L540 400L510 330L300 330Z" fill="url(#coatg)" stroke="#2a3562" stroke-width="5"/><path d="M110 460L122 476L180 456L205 472L226 460L230 412Z" fill="#b5dcf5" stroke="#1e2a55" stroke-width="5"/><path d="M332 118C345 108 370 100 400 100L545 108C552 150 556 200 560 250L546 252L600 332L640 402L640 440L660 462L672 440L700 430L780 436L796 420L780 400L692 380L650 330L600 230L560 130C570 180 575 280 560 330L520 360L582 478L500 488L440 330L405 210L350 262L280 342L230 412L110 462L180 380L230 310L270 250L300 180Z" fill="url(#coatg)" stroke="#2a3562" stroke-width="5"/><path d="M640 402L692 382L780 400L796 420L780 436L700 430L672 440L660 462L640 440Z" fill="#b5dcf5" stroke="#1e2a55" stroke-width="5"/><path d="M405 210L440 330L500 488M350 262L300 400M545 250L520 360" fill="none" stroke="#6a6aa8" stroke-width="4" opacity="0.700"/><path d="M385 70L400 40L500 40L548 108L512 165L478 122L380 102Z" fill="#b8ddf6" stroke="#1e2a55" stroke-width="5"/><circle cx="512" cy="172" r="6" fill="none" stroke="#5a78b0" stroke-width="3"/></g><g transform="translate(330 154.800) scale(0.14778 0.15250)" stroke-linejoin="round"><path d="M300 45C330 42 365 60 400 85C420 95 450 98 480 108C520 122 550 150 556 190C558 225 540 250 510 265L500 280C525 295 538 325 530 350C524 366 508 374 492 376C512 395 524 420 515 440C505 462 478 470 455 464C438 460 422 448 415 435L300 442C290 462 265 472 240 470C215 468 195 458 182 448C170 440 150 440 125 445C100 448 75 425 70 395C68 375 78 355 92 335C98 300 100 260 100 220C100 190 104 160 112 140C125 105 160 75 195 62C230 50 270 46 300 45Z" fill="url(#hairg)" stroke="#25266e" stroke-width="7"/><path d="M300 60C250 75 205 105 188 140C175 175 180 230 205 275C222 300 212 330 192 322C176 314 190 292 206 300M430 150C465 170 480 205 470 240M400 250C380 255 360 240 365 220C372 200 400 205 405 225M135 415C110 405 105 375 128 365C150 358 165 380 150 395C142 402 130 398 130 388M200 445C178 438 172 410 192 400C212 392 226 412 214 426C206 434 196 430 196 420M262 458C242 452 236 426 254 416C272 408 286 426 276 440C270 447 260 444 260 436M478 440C456 432 452 405 472 396C492 390 504 410 494 424C486 432 476 428 476 418" fill="none" stroke="#25266e" stroke-width="8" stroke-linecap="round"/><path d="M335 286C350 280 395 280 425 286C440 292 450 318 452 345C452 372 438 398 420 412C405 426 385 438 370 448L330 458C312 452 300 446 292 436C278 418 262 398 266 372C268 350 278 330 296 312Z" fill="#06061c"/><path d="M210 182C224 172 240 192 246 214C250 228 256 240 252 250C240 254 226 240 218 222C210 206 202 192 210 182ZM258 162C270 154 288 166 296 188C302 208 292 232 268 250C258 244 260 226 262 210C264 194 252 172 258 162Z" fill="#d9b84e" stroke="#8c6a22" stroke-width="4"/><path d="M435 292C455 285 475 300 498 305L490 318L502 330L480 335C470 350 450 350 436 335C428 322 428 302 435 292Z" fill="#eef0f6" stroke="#b4c4e4" stroke-width="3"/><path d="M440 300C450 300 452 330 444 338" stroke="#d8b8a8" stroke-width="5" fill="none"/><path d="M432 250L462 256L460 266L430 260Z" fill="#e4e8f4"/><path d="M362 395L395 382L404 396L372 410Z" fill="#c8ccd8"/></g></g></svg>
<div style="left:918px;top:160px;width:106px;height:29.5px;background:#303030;"></div>
<div style="left:920.3px;top:164px;width:37.7px;height:9px;background:#262626;border:1px solid #4a4a4a;"></div>
<svg style="left:938px;top:164.5px;" width="19.5" height="8" viewBox="0 0 19.5 8"><path d="M0 8V1.500C6 1.500 13 3 19.500 7.5V8Z" fill="#1a1a1a"/></svg>
<span class="t" style="left:921.5px;top:163px;font-size:8.5px;color:#c0c0c0;line-height:12px;transform:scaleX(0.804);transform-origin:0 0;">43.8</span>
<div style="left:938.2px;top:162px;width:1.6px;height:13px;background:#8a8a8a;"></div>
<div style="left:920.3px;top:177.5px;width:37.7px;height:9px;background:#262626;border:1px solid #4a4a4a;"></div>
<svg style="left:938px;top:178.0px;" width="19.5" height="8" viewBox="0 0 19.5 8"><path d="M0 8V1.500C6 1.500 13 3 19.500 7.5V8Z" fill="#1a1a1a"/></svg>
<span class="t" style="left:921.5px;top:177px;font-size:8.5px;color:#c0c0c0;line-height:12px;transform:scaleX(0.787);transform-origin:0 0;">0.0</span>
<div style="left:939.8px;top:175.5px;width:1.6px;height:13px;background:#8a8a8a;"></div>
<svg style="left:962.3px;top:163.3px;" width="11" height="11" viewBox="0 0 11 11"><circle cx="5.500" cy="5.500" r="4.800" fill="none" stroke="#d8d8d8" stroke-width="1"/><path d="M3 5.500H8" stroke="#d8d8d8" stroke-width="1"/></svg>
<svg style="left:976px;top:163.3px;" width="11" height="11" viewBox="0 0 11 11"><circle cx="5.500" cy="5.500" r="4.800" fill="none" stroke="#d8d8d8" stroke-width="1"/><path d="M3 5.500H8M5.500 3V8" stroke="#d8d8d8" stroke-width="1"/></svg>
<svg style="left:989.5px;top:163.3px;" width="11" height="11" viewBox="0 0 11 11"><circle cx="5.500" cy="5.500" r="4.800" fill="none" stroke="#d8d8d8" stroke-width="1"/><rect x="3.200" y="3.200" width="4.600" height="4.600" rx="0.800" fill="#d8d8d8"/></svg>
<div style="left:1004px;top:162px;width:14px;height:13px;background:#46506b;"></div>
<svg style="left:1005.5px;top:163.5px;" width="11" height="10" viewBox="0 0 11 10"><rect x="0.500" y="0.500" width="5" height="5" fill="none" stroke="#cfd6ea" stroke-width="1"/><rect x="5" y="4.500" width="5" height="5" fill="#46506b" stroke="#cfd6ea" stroke-width="1"/><path d="M2 7.500L3.500 9L2 9" stroke="#cfd6ea" stroke-width="0.700" fill="none"/></svg>
<div style="left:1020.5px;top:163px;width:4px;height:10px;border:1px solid #ccc;border-right:none;"></div>
<svg style="left:962.3px;top:177.5px;" width="11" height="11" viewBox="0 0 11 11"><path d="M2.500 3.500C4 1.200 7.500 1 9.200 3.200C10.800 5.500 10 8.500 7.500 9.800" fill="none" stroke="#d8d8d8" stroke-width="1.100"/><path d="M0.500 2L1.500 6L5 4.500Z" fill="#d8d8d8"/></svg>
<svg style="left:976px;top:177.5px;" width="11" height="11" viewBox="0 0 11 11"><path d="M8.500 3.500C7 1.200 3.500 1 1.800 3.200C0.200 5.500 1 8.500 3.500 9.800" fill="none" stroke="#d8d8d8" stroke-width="1.100"/><path d="M10.500 2L9.500 6L6 4.500Z" fill="#d8d8d8"/></svg>
<svg style="left:989.5px;top:177.5px;" width="11" height="11" viewBox="0 0 11 11"><circle cx="5.500" cy="5.800" r="4.600" fill="none" stroke="#d8d8d8" stroke-width="1"/><path d="M5.500 0.500V6" stroke="#d8d8d8" stroke-width="1"/><circle cx="5.500" cy="6" r="1.400" fill="#d8d8d8"/></svg>
<div style="left:1003.2px;top:178px;width:1px;height:9.5px;background:#555;"></div>
<svg style="left:1006.2px;top:178px;" width="11" height="10" viewBox="0 0 11 10"><path d="M0.500 1V9L4.300 5Z" fill="none" stroke="#d8d8d8" stroke-width="0.900"/><path d="M10.500 1V9L6.700 5Z" fill="#d8d8d8"/><path d="M5.500 0V10" stroke="#d8d8d8" stroke-width="0.800"/></svg>
<svg style="left:1020.5px;top:178px;" width="5" height="10" viewBox="0 0 5 10"><path d="M0.500 2H4M0.500 8H4M1 5H4" stroke="#d8d8d8" stroke-width="0.900"/></svg>
<div style="left:921.5px;top:195px;width:4.5px;height:1px;background:#555;"></div>
<div style="left:921.5px;top:197px;width:4.5px;height:1px;background:#555;"></div>
<div style="left:921.5px;top:199px;width:4.5px;height:1px;background:#555;"></div>
<div style="left:930.7px;top:192.2px;width:37px;height:12px;background:#303030;"></div>
<svg style="left:935px;top:193.5px;" width="12" height="11" viewBox="0 0 12 11"><path d="M6 0.600L11 3L6 5.400L1 3Z" fill="none" stroke="#c8c8c8" stroke-width="0.900" stroke-linejoin="round"/><path d="M1 5.300L6 7.700L11 5.300M1 7.600L6 10L11 7.600" fill="none" stroke="#c8c8c8" stroke-width="0.900" stroke-linejoin="round"/></svg>
<span class="t" style="left:950px;top:194px;font-size:7.8px;color:#bdbdbd;line-height:11px;transform:scaleX(0.779);transform-origin:0 0;">Layer</span>
<div style="left:918px;top:204px;width:106px;height:46.7px;background:#303030;"></div>
<div style="left:918.5px;top:205.3px;width:26.7px;height:13.2px;background:#343434;border:1px solid #5a5a5a;"></div>
<div style="left:921.5px;top:208px;width:10.5px;height:8px;background:#3c3c3c;border:1px solid #8c8c8c;border-radius:1px;"></div>
<svg style="left:936.5px;top:210px;" width="6" height="5" viewBox="0 0 6 5"><path d="M0.500 0.800L3 3.500L5.500 0.800" fill="none" stroke="#bbb" stroke-width="0.900"/></svg>
<div style="left:947.2px;top:205.3px;width:27.5px;height:13.2px;background:#343434;border:1px solid #5a5a5a;"></div>
<span class="t" style="left:950px;top:207px;line-height:11px;font-size:8px;color:#9a9a9a;width:16.500px;overflow:hidden;-webkit-mask:linear-gradient(90deg,#000 65%,transparent 100%);mask:linear-gradient(90deg,#000 65%,transparent 100%)">Normal</span>
<svg style="left:966.5px;top:210px;" width="6" height="5" viewBox="0 0 6 5"><path d="M0.500 0.800L3 3.500L5.500 0.800" fill="none" stroke="#bbb" stroke-width="0.900"/></svg>
<div style="left:979.2px;top:208.9px;width:26.3px;height:6px;background:#fafafa;background-image:conic-gradient(#e4e4e4 25%,#fff 25% 50%,#e4e4e4 50% 75%,#fff 75%);background-size:4px 4px;"></div>
<div style="left:1006px;top:205.5px;width:1.5px;height:13px;background:#8a8a8a;"></div>
<span class="t" style="left:1011.3px;top:207px;font-size:8px;color:#c8c8c8;line-height:11px;transform:scaleX(0.824);transform-origin:0 0;">100</span>
<svg style="left:920px;top:221.5px;" width="11" height="11" viewBox="0 0 11 11"><rect x="2.800" y="0.600" width="7.500" height="7.500" fill="none" stroke="#c6c6c6" stroke-width="0.900" stroke-dasharray="1.400 0.900"/><rect x="0.600" y="3" width="7.500" height="7.500" fill="#8a8a8a" stroke="#c6c6c6" stroke-width="0.900"/></svg>
<svg style="left:933px;top:221px;" width="11" height="12" viewBox="0 0 11 12"><path d="M4 4.500H7L8 11.500H3Z" fill="#c6c6c6"/><path d="M3.500 2.500H7.500V4.500H3.500Z" fill="#c6c6c6"/><path d="M5.500 0.500V2.500M0.500 2.500L3 3.500M10.500 2.500L8 3.500M0.500 5.500L3 4.500M10.500 5.500L8 4.500" stroke="#c6c6c6" stroke-width="0.800"/></svg>
<svg style="left:948px;top:221.5px;" width="11" height="11" viewBox="0 0 11 11"><path d="M1 0.600H6V6C6 8 1 8 1 6Z" fill="none" stroke="#c6c6c6" stroke-width="1"/><path d="M2.200 1.500V4.500M3.500 1.500V4.500M4.800 1.500V4.500" stroke="#c6c6c6" stroke-width="0.600"/><path d="M6 9.500C7.500 8 9 8 10 10" stroke="#c6c6c6" stroke-width="0.900" fill="none"/></svg>
<svg style="left:962px;top:221px;" width="10" height="12" viewBox="0 0 10 12"><path d="M2.500 5.500V3.500C2.500 0.500 7.500 0.500 7.500 3.500V5.500" fill="none" stroke="#c6c6c6" stroke-width="1.100"/><rect x="1" y="5.500" width="8" height="5.500" rx="0.600" fill="#c6c6c6"/></svg>
<svg style="left:975px;top:221px;" width="11" height="12" viewBox="0 0 11 12"><rect x="1" y="6" width="5.500" height="5" fill="#c6c6c6"/><path d="M2.300 6V4.500C2.300 3 5.200 3 5.200 4.500V6" fill="none" stroke="#c6c6c6" stroke-width="0.900"/><rect x="5.500" y="0.500" width="2.600" height="2.600" fill="#c6c6c6"/><rect x="8.100" y="3.100" width="2.600" height="2.600" fill="#c6c6c6"/><rect x="8.100" y="8.300" width="2.600" height="2.600" fill="#c6c6c6"/><rect x="5.500" y="3.100" width="2.600" height="2.600" fill="#777"/></svg>
<div style="left:988.5px;top:220.3px;width:18.5px;height:13.5px;background:#333;"></div>
<svg style="left:990.5px;top:222px;" width="15" height="11" viewBox="0 0 15 11"><rect x="0.500" y="0.500" width="7" height="7" rx="1" fill="#555" stroke="#5c5c5c" stroke-width="1"/><circle cx="4" cy="4" r="2" fill="#444"/><path d="M5.500 7L9 10.500M9 7L5.500 10.500" stroke="#5c5c5c" stroke-width="0.900"/><path d="M9.500 3L11.500 5L13.500 3" stroke="#5c5c5c" stroke-width="0.900" fill="none"/></svg>
<div style="left:1011px;top:220.3px;width:13px;height:13.5px;background:#333;"></div>
<svg style="left:1013px;top:222px;" width="11" height="11" viewBox="0 0 11 11"><path d="M0.500 8.500V0.500H9.500" fill="none" stroke="#5c5c5c" stroke-width="1"/><path d="M9 1L1 9" stroke="#5c5c5c" stroke-width="1"/><path d="M6 6.500L10 10.500M10 6.500L6 10.500" stroke="#5c5c5c" stroke-width="0.900"/></svg>
<svg style="left:923.5px;top:236.5px;" width="12" height="12" viewBox="0 0 12 12"><path d="M0.600 0.600H9.500V7M0.600 0.600V9.500H7M0.600 9.500L3 7" fill="none" stroke="#c6c6c6" stroke-width="1.100"/><circle cx="9.3" cy="9.3" r="2.300" fill="#2d2d2d" stroke="#c6c6c6" stroke-width="0.800"/><path d="M7.9 9.3H10.700000000000001M9.3 7.9V10.700000000000001" stroke="#c6c6c6" stroke-width="0.800"/></svg>
<svg style="left:937px;top:236.5px;" width="12" height="12" viewBox="0 0 12 12"><path d="M0.600 0.600H9.500V7M0.600 0.600V9.500H7" fill="none" stroke="#c6c6c6" stroke-width="1.100"/><circle cx="5" cy="5" r="2.200" fill="none" stroke="#c6c6c6" stroke-width="0.800"/><path d="M3.500 8H6.500" stroke="#c6c6c6" stroke-width="0.800"/><circle cx="9.3" cy="9.3" r="2.300" fill="#2d2d2d" stroke="#c6c6c6" stroke-width="0.800"/><path d="M7.9 9.3H10.700000000000001M9.3 7.9V10.700000000000001" stroke="#c6c6c6" stroke-width="0.800"/></svg>
<svg style="left:950.5px;top:236.5px;" width="12" height="12" viewBox="0 0 12 12"><path d="M0.500 1H4L5 2.500H10V9.500H0.500Z" fill="#c6c6c6"/><circle cx="9.3" cy="9.5" r="2.300" fill="#2d2d2d" stroke="#c6c6c6" stroke-width="0.800"/><path d="M7.9 9.5H10.700000000000001M9.3 8.1V10.9" stroke="#c6c6c6" stroke-width="0.800"/></svg>
<svg style="left:964px;top:236.5px;" width="12" height="12" viewBox="0 0 12 12"><rect x="4.500" y="0.600" width="6" height="6" rx="1" fill="none" stroke="#5c5c5c" stroke-width="0.900"/><rect x="0.600" y="4.500" width="6" height="6" rx="1" fill="#3a3a3a" stroke="#5c5c5c" stroke-width="0.900"/><path d="M7.500 2V5M6 3.500H9" stroke="#5c5c5c" stroke-width="0.700"/></svg>
<svg style="left:978px;top:236.5px;" width="12" height="12" viewBox="0 0 12 12"><rect x="4.500" y="0.600" width="6" height="6" rx="1" fill="none" stroke="#5c5c5c" stroke-width="0.900"/><rect x="0.600" y="4.500" width="6" height="6" rx="1" fill="#3a3a3a" stroke="#5c5c5c" stroke-width="0.900"/><path d="M2 9L5 6M2 9V7M2 9H4" stroke="#5c5c5c" stroke-width="0.700" fill="none"/></svg>
<svg style="left:992px;top:237px;" width="11" height="11" viewBox="0 0 11 11"><rect x="0" y="0" width="10.500" height="10.500" rx="1" fill="#e4e4e4"/><circle cx="5.250" cy="5.250" r="2.800" fill="#1a1a1a"/></svg>
<svg style="left:1005px;top:237.5px;" width="12" height="10" viewBox="0 0 12 10"><rect x="0.500" y="2" width="7" height="7" rx="1" fill="none" stroke="#5c5c5c" stroke-width="0.900"/><path d="M2 5.500H6M4 3.500V7.500" stroke="#5c5c5c" stroke-width="0.800"/><rect x="6.500" y="4.500" width="5" height="4.500" fill="#2d2d2d" stroke="#5c5c5c" stroke-width="0.900"/><rect x="7.500" y="3" width="2.500" height="1.500" fill="#5c5c5c"/></svg>
<svg style="left:1019.5px;top:237.5px;" width="5" height="10" viewBox="0 0 5 10"><path d="M0.500 2.500H5M1.500 2.500V9.500H5M2 1H5" stroke="#9a9a9a" stroke-width="0.900" fill="none"/></svg>
<div style="left:918px;top:250.7px;width:106px;height:20.8px;background:#2b2b2b;"></div>
<div style="left:945.5px;top:250.7px;width:78.5px;height:19.8px;background:#272727;"></div>
<div style="left:918px;top:270.5px;width:106px;height:1px;background:#1a1a1a;"></div>
<div style="left:931.5px;top:250.7px;width:1px;height:20.8px;background:#1c1c1c;"></div>
<div style="left:944.8px;top:250.7px;width:1px;height:20.8px;background:#1c1c1c;"></div>
<div style="left:945.8px;top:250.7px;width:25.5px;height:19.8px;background:#46506b;"></div>
<svg style="left:934px;top:256.2px;" width="9" height="9" viewBox="0 0 9 9"><path d="M1 8L2 5.500L7 0.500L8.500 2L3.500 7Z M0 8.500H8.500" fill="none" stroke="#8c8c8c" stroke-width="0.800"/></svg>
<svg style="left:918.7px;top:256.5px;" width="12" height="8.4" viewBox="0 0 12 8.4"><path d="M0.500 4.200C2.500 0.600 9.500 0.600 11.500 4.200C9.500 7.800 2.500 7.800 0.500 4.200Z" fill="#dcdcdc"/><circle cx="6" cy="4" r="2.100" fill="#2b2b2b"/><circle cx="6" cy="4" r="1" fill="#dcdcdc"/></svg>
<svg style="left:948.5px;top:257.2px;" width="5" height="8" viewBox="0 0 5 8"><path d="M0.800 0.600L4 4L0.800 7.400" fill="none" stroke="#e0e0e0" stroke-width="1.100"/></svg>
<svg style="left:957px;top:255.2px;" width="12" height="11" viewBox="0 0 12 11"><path d="M3 2.500V0.600H11.400V8H9.500" fill="none" stroke="#acacac" stroke-width="1"/><rect x="0.600" y="2.500" width="9" height="8" rx="0.800" fill="#6e6e6e" stroke="#acacac" stroke-width="1.100"/><rect x="2.800" y="4.500" width="4.800" height="4" fill="#46506b" stroke="#acacac" stroke-width="0.600"/></svg>
<span class="t" style="left:976px;top:252px;font-size:8px;color:#d2d2d2;line-height:11px;transform:scaleX(0.882);transform-origin:0 0;">100 % Normal</span>
<span class="t" style="left:976px;top:260px;font-size:8px;color:#d2d2d2;line-height:11px;transform:scaleX(0.841);transform-origin:0 0;">eye mouth : 24</span>
<div style="left:918px;top:271.5px;width:106px;height:20.8px;background:#2b2b2b;"></div>
<div style="left:945.5px;top:271.5px;width:78.5px;height:19.8px;background:#272727;"></div>
<div style="left:918px;top:291.3px;width:106px;height:1px;background:#1a1a1a;"></div>
<div style="left:931.5px;top:271.5px;width:1px;height:20.8px;background:#1c1c1c;"></div>
<div style="left:944.8px;top:271.5px;width:1px;height:20.8px;background:#1c1c1c;"></div>
<div style="left:934.3px;top:277.0px;width:7.5px;height:8.5px;border:1px solid #1e1e1e;border-radius:1.500px;"></div>
<svg style="left:918.7px;top:277.3px;" width="12" height="8.4" viewBox="0 0 12 8.4"><path d="M0.500 4.200C2.500 0.600 9.500 0.600 11.500 4.200C9.500 7.800 2.500 7.800 0.500 4.200Z" fill="#dcdcdc"/><circle cx="6" cy="4" r="2.100" fill="#2b2b2b"/><circle cx="6" cy="4" r="1" fill="#dcdcdc"/></svg>
<svg style="left:948.5px;top:278.0px;" width="5" height="8" viewBox="0 0 5 8"><path d="M0.800 0.600L4 4L0.800 7.400" fill="none" stroke="#e0e0e0" stroke-width="1.100"/></svg>
<svg style="left:957px;top:276.0px;" width="12" height="11" viewBox="0 0 12 11"><path d="M3 2.500V0.600H11.400V8H9.500" fill="none" stroke="#acacac" stroke-width="1"/><rect x="0.600" y="2.500" width="9" height="8" rx="0.800" fill="#6e6e6e" stroke="#acacac" stroke-width="1.100"/><rect x="2.800" y="4.500" width="4.800" height="4" fill="#222" stroke="#acacac" stroke-width="0.600"/></svg>
<span class="t" style="left:976px;top:273px;font-size:8px;color:#d2d2d2;line-height:11px;transform:scaleX(0.882);transform-origin:0 0;">100 % Normal</span>
<span class="t" style="left:976px;top:281px;font-size:8px;color:#d2d2d2;line-height:11px;transform:scaleX(0.897);transform-origin:0 0;">eyeee : 24</span>
<div style="left:918px;top:292.3px;width:106px;height:20.8px;background:#2b2b2b;"></div>
<div style="left:945.5px;top:292.3px;width:78.5px;height:19.8px;background:#272727;"></div>
<div style="left:918px;top:312.1px;width:106px;height:1px;background:#1a1a1a;"></div>
<div style="left:931.5px;top:292.3px;width:1px;height:20.8px;background:#1c1c1c;"></div>
<div style="left:944.8px;top:292.3px;width:1px;height:20.8px;background:#1c1c1c;"></div>
<div style="left:934.3px;top:297.8px;width:7.5px;height:8.5px;border:1px solid #1e1e1e;border-radius:1.500px;"></div>
<svg style="left:918.7px;top:298.1px;" width="12" height="8.4" viewBox="0 0 12 8.4"><path d="M0.500 4.200C2.500 0.600 9.500 0.600 11.500 4.200C9.500 7.800 2.500 7.800 0.500 4.200Z" fill="#dcdcdc"/><circle cx="6" cy="4" r="2.100" fill="#2b2b2b"/><circle cx="6" cy="4" r="1" fill="#dcdcdc"/></svg>
<svg style="left:948.5px;top:298.8px;" width="5" height="8" viewBox="0 0 5 8"><path d="M0.800 0.600L4 4L0.800 7.400" fill="none" stroke="#e0e0e0" stroke-width="1.100"/></svg>
<svg style="left:957px;top:296.8px;" width="12" height="11" viewBox="0 0 12 11"><path d="M3 2.500V0.600H11.400V8H9.500" fill="none" stroke="#acacac" stroke-width="1"/><rect x="0.600" y="2.500" width="9" height="8" rx="0.800" fill="#6e6e6e" stroke="#acacac" stroke-width="1.100"/><rect x="2.800" y="4.500" width="4.800" height="4" fill="#222" stroke="#acacac" stroke-width="0.600"/></svg>
<span class="t" style="left:976px;top:294px;font-size:8px;color:#d2d2d2;line-height:11px;transform:scaleX(0.882);transform-origin:0 0;">100 % Normal</span>
<span class="t" style="left:976px;top:302px;font-size:8px;color:#d2d2d2;line-height:11px;transform:scaleX(0.662);transform-origin:0 0;">eye mouth color : 24</span>
<div style="left:918px;top:313.1px;width:106px;height:20.8px;background:#2b2b2b;"></div>
<div style="left:945.5px;top:313.1px;width:78.5px;height:19.8px;background:#272727;"></div>
<div style="left:918px;top:332.90000000000003px;width:106px;height:1px;background:#1a1a1a;"></div>
<div style="left:931.5px;top:313.1px;width:1px;height:20.8px;background:#1c1c1c;"></div>
<div style="left:944.8px;top:313.1px;width:1px;height:20.8px;background:#1c1c1c;"></div>
<div style="left:934.3px;top:318.6px;width:7.5px;height:8.5px;border:1px solid #1e1e1e;border-radius:1.500px;"></div>
<svg style="left:918.7px;top:318.90000000000003px;" width="12" height="8.4" viewBox="0 0 12 8.4"><path d="M0.500 4.200C2.500 0.600 9.500 0.600 11.500 4.200C9.500 7.800 2.500 7.800 0.500 4.200Z" fill="#dcdcdc"/><circle cx="6" cy="4" r="2.100" fill="#2b2b2b"/><circle cx="6" cy="4" r="1" fill="#dcdcdc"/></svg>
<svg style="left:948.5px;top:319.6px;" width="5" height="8" viewBox="0 0 5 8"><path d="M0.800 0.600L4 4L0.800 7.400" fill="none" stroke="#e0e0e0" stroke-width="1.100"/></svg>
<svg style="left:957px;top:317.6px;" width="12" height="11" viewBox="0 0 12 11"><path d="M3 2.500V0.600H11.400V8H9.500" fill="none" stroke="#acacac" stroke-width="1"/><rect x="0.600" y="2.500" width="9" height="8" rx="0.800" fill="#6e6e6e" stroke="#acacac" stroke-width="1.100"/><rect x="2.800" y="4.500" width="4.800" height="4" fill="#222" stroke="#acacac" stroke-width="0.600"/></svg>
<span class="t" style="left:976px;top:315px;font-size:8px;color:#d2d2d2;line-height:11px;transform:scaleX(0.882);transform-origin:0 0;">100 % Normal</span>
<span class="t" style="left:976px;top:323px;font-size:8px;color:#d2d2d2;line-height:11px;transform:scaleX(0.929);transform-origin:0 0;">hairclip : 24</span>
<div style="left:918px;top:333.9px;width:106px;height:20.8px;background:#2b2b2b;"></div>
<div style="left:945.5px;top:333.9px;width:78.5px;height:19.8px;background:#272727;"></div>
<div style="left:918px;top:353.7px;width:106px;height:1px;background:#1a1a1a;"></div>
<div style="left:931.5px;top:333.9px;width:1px;height:20.8px;background:#1c1c1c;"></div>
<div style="left:944.8px;top:333.9px;width:1px;height:20.8px;background:#1c1c1c;"></div>
<div style="left:934.3px;top:339.4px;width:7.5px;height:8.5px;border:1px solid #1e1e1e;border-radius:1.500px;"></div>
<svg style="left:918.7px;top:339.7px;" width="12" height="8.4" viewBox="0 0 12 8.4"><path d="M0.500 4.200C2.500 0.600 9.500 0.600 11.500 4.200C9.500 7.800 2.500 7.800 0.500 4.200Z" fill="#dcdcdc"/><circle cx="6" cy="4" r="2.100" fill="#2b2b2b"/><circle cx="6" cy="4" r="1" fill="#dcdcdc"/></svg>
<svg style="left:948.5px;top:340.4px;" width="5" height="8" viewBox="0 0 5 8"><path d="M0.800 0.600L4 4L0.800 7.400" fill="none" stroke="#e0e0e0" stroke-width="1.100"/></svg>
<svg style="left:957px;top:338.4px;" width="12" height="11" viewBox="0 0 12 11"><path d="M3 2.500V0.600H11.400V8H9.500" fill="none" stroke="#acacac" stroke-width="1"/><rect x="0.600" y="2.500" width="9" height="8" rx="0.800" fill="#6e6e6e" stroke="#acacac" stroke-width="1.100"/><rect x="2.800" y="4.500" width="4.800" height="4" fill="#222" stroke="#acacac" stroke-width="0.600"/></svg>
<span class="t" style="left:976px;top:336px;font-size:8px;color:#d2d2d2;line-height:11px;transform:scaleX(0.882);transform-origin:0 0;">100 % Normal</span>
<span class="t" style="left:976px;top:344px;font-size:8px;color:#d2d2d2;line-height:11px;transform:scaleX(0.900);transform-origin:0 0;">hair : 24</span>
<div style="left:918px;top:354.7px;width:106px;height:20.8px;background:#2b2b2b;"></div>
<div style="left:945.5px;top:354.7px;width:78.5px;height:19.8px;background:#272727;"></div>
<div style="left:918px;top:374.5px;width:106px;height:1px;background:#1a1a1a;"></div>
<div style="left:931.5px;top:354.7px;width:1px;height:20.8px;background:#1c1c1c;"></div>
<div style="left:944.8px;top:354.7px;width:1px;height:20.8px;background:#1c1c1c;"></div>
<div style="left:934.3px;top:360.2px;width:7.5px;height:8.5px;border:1px solid #1e1e1e;border-radius:1.500px;"></div>
<svg style="left:918.7px;top:360.5px;" width="12" height="8.4" viewBox="0 0 12 8.4"><path d="M0.500 4.200C2.500 0.600 9.500 0.600 11.500 4.200C9.500 7.800 2.500 7.800 0.500 4.200Z" fill="#dcdcdc"/><circle cx="6" cy="4" r="2.100" fill="#2b2b2b"/><circle cx="6" cy="4" r="1" fill="#dcdcdc"/></svg>
<svg style="left:948.5px;top:361.2px;" width="5" height="8" viewBox="0 0 5 8"><path d="M0.800 0.600L4 4L0.800 7.400" fill="none" stroke="#e0e0e0" stroke-width="1.100"/></svg>
<svg style="left:957px;top:359.2px;" width="12" height="11" viewBox="0 0 12 11"><path d="M3 2.500V0.600H11.400V8H9.500" fill="none" stroke="#acacac" stroke-width="1"/><rect x="0.600" y="2.500" width="9" height="8" rx="0.800" fill="#6e6e6e" stroke="#acacac" stroke-width="1.100"/><rect x="2.800" y="4.500" width="4.800" height="4" fill="#222" stroke="#acacac" stroke-width="0.600"/></svg>
<span class="t" style="left:976px;top:356px;font-size:8px;color:#d2d2d2;line-height:11px;transform:scaleX(0.882);transform-origin:0 0;">100 % Normal</span>
<span class="t" style="left:976px;top:364px;font-size:8px;color:#d2d2d2;line-height:11px;transform:scaleX(0.867);transform-origin:0 0;">shoes : 24</span>
<div style="left:918px;top:375.5px;width:106px;height:20.8px;background:#2b2b2b;"></div>
<div style="left:945.5px;top:375.5px;width:78.5px;height:19.8px;background:#272727;"></div>
<div style="left:918px;top:395.3px;width:106px;height:1px;background:#1a1a1a;"></div>
<div style="left:931.5px;top:375.5px;width:1px;height:20.8px;background:#1c1c1c;"></div>
<div style="left:944.8px;top:375.5px;width:1px;height:20.8px;background:#1c1c1c;"></div>
<div style="left:934.3px;top:381.0px;width:7.5px;height:8.5px;border:1px solid #1e1e1e;border-radius:1.500px;"></div>
<svg style="left:918.7px;top:381.3px;" width="12" height="8.4" viewBox="0 0 12 8.4"><path d="M0.500 4.200C2.500 0.600 9.500 0.600 11.500 4.200C9.500 7.800 2.500 7.800 0.500 4.200Z" fill="#dcdcdc"/><circle cx="6" cy="4" r="2.100" fill="#2b2b2b"/><circle cx="6" cy="4" r="1" fill="#dcdcdc"/></svg>
<svg style="left:948.5px;top:382.0px;" width="5" height="8" viewBox="0 0 5 8"><path d="M0.800 0.600L4 4L0.800 7.400" fill="none" stroke="#e0e0e0" stroke-width="1.100"/></svg>
<svg style="left:957px;top:380.0px;" width="12" height="11" viewBox="0 0 12 11"><path d="M3 2.500V0.600H11.400V8H9.500" fill="none" stroke="#acacac" stroke-width="1"/><rect x="0.600" y="2.500" width="9" height="8" rx="0.800" fill="#6e6e6e" stroke="#acacac" stroke-width="1.100"/><rect x="2.800" y="4.500" width="4.800" height="4" fill="#222" stroke="#acacac" stroke-width="0.600"/></svg>
<span class="t" style="left:976px;top:377px;font-size:8px;color:#d2d2d2;line-height:11px;transform:scaleX(0.882);transform-origin:0 0;">100 % Normal</span>
<span class="t" style="left:976px;top:385px;font-size:8px;color:#d2d2d2;line-height:11px;transform:scaleX(0.883);transform-origin:0 0;">dress : 26</span>
<div style="left:918px;top:396.29999999999995px;width:106px;height:20.8px;background:#2b2b2b;"></div>
<div style="left:945.5px;top:396.29999999999995px;width:78.5px;height:19.8px;background:#272727;"></div>
<div style="left:918px;top:416.09999999999997px;width:106px;height:1px;background:#1a1a1a;"></div>
<div style="left:931.5px;top:396.29999999999995px;width:1px;height:20.8px;background:#1c1c1c;"></div>
<div style="left:944.8px;top:396.29999999999995px;width:1px;height:20.8px;background:#1c1c1c;"></div>
<div style="left:934.3px;top:401.79999999999995px;width:7.5px;height:8.5px;border:1px solid #1e1e1e;border-radius:1.500px;"></div>
<svg style="left:918.7px;top:402.09999999999997px;" width="12" height="8.4" viewBox="0 0 12 8.4"><path d="M0.500 4.200C2.500 0.600 9.500 0.600 11.500 4.200C9.500 7.800 2.500 7.800 0.500 4.200Z" fill="#dcdcdc"/><circle cx="6" cy="4" r="2.100" fill="#2b2b2b"/><circle cx="6" cy="4" r="1" fill="#dcdcdc"/></svg>
<svg style="left:948.5px;top:402.79999999999995px;" width="5" height="8" viewBox="0 0 5 8"><path d="M0.800 0.600L4 4L0.800 7.400" fill="none" stroke="#e0e0e0" stroke-width="1.100"/></svg>
<svg style="left:957px;top:400.79999999999995px;" width="12" height="11" viewBox="0 0 12 11"><path d="M3 2.500V0.600H11.400V8H9.500" fill="none" stroke="#acacac" stroke-width="1"/><rect x="0.600" y="2.500" width="9" height="8" rx="0.800" fill="#6e6e6e" stroke="#acacac" stroke-width="1.100"/><rect x="2.800" y="4.500" width="4.800" height="4" fill="#222" stroke="#acacac" stroke-width="0.600"/></svg>
<span class="t" style="left:976px;top:398px;font-size:8px;color:#d2d2d2;line-height:11px;transform:scaleX(0.882);transform-origin:0 0;">100 % Normal</span>
<span class="t" style="left:976px;top:406px;font-size:8px;color:#d2d2d2;line-height:11px;transform:scaleX(0.807);transform-origin:0 0;">body proper : 24</span>
<div style="left:918px;top:417.1px;width:106px;height:20.8px;background:#2b2b2b;"></div>
<div style="left:945.5px;top:417.1px;width:78.5px;height:19.8px;background:#272727;"></div>
<div style="left:918px;top:436.90000000000003px;width:106px;height:1px;background:#1a1a1a;"></div>
<div style="left:931.5px;top:417.1px;width:1px;height:20.8px;background:#1c1c1c;"></div>
<div style="left:944.8px;top:417.1px;width:1px;height:20.8px;background:#1c1c1c;"></div>
<div style="left:934.3px;top:422.6px;width:7.5px;height:8.5px;border:1px solid #1e1e1e;border-radius:1.500px;"></div>
<svg style="left:918.7px;top:422.90000000000003px;" width="12" height="8.4" viewBox="0 0 12 8.4"><path d="M0.500 4.200C2.500 0.600 9.500 0.600 11.500 4.200C9.500 7.800 2.500 7.800 0.500 4.200Z" fill="#dcdcdc"/><circle cx="6" cy="4" r="2.100" fill="#2b2b2b"/><circle cx="6" cy="4" r="1" fill="#dcdcdc"/></svg>
<svg style="left:948.5px;top:423.6px;" width="5" height="8" viewBox="0 0 5 8"><path d="M0.800 0.600L4 4L0.800 7.400" fill="none" stroke="#e0e0e0" stroke-width="1.100"/></svg>
<svg style="left:957px;top:421.6px;" width="12" height="11" viewBox="0 0 12 11"><path d="M3 2.500V0.600H11.400V8H9.500" fill="none" stroke="#acacac" stroke-width="1"/><rect x="0.600" y="2.500" width="9" height="8" rx="0.800" fill="#6e6e6e" stroke="#acacac" stroke-width="1.100"/><rect x="2.800" y="4.500" width="4.800" height="4" fill="#222" stroke="#acacac" stroke-width="0.600"/></svg>
<span class="t" style="left:976px;top:419px;font-size:8px;color:#d2d2d2;line-height:11px;transform:scaleX(0.882);transform-origin:0 0;">100 % Normal</span>
<span class="t" style="left:976px;top:427px;font-size:8px;color:#d2d2d2;line-height:11px;transform:scaleX(0.861);transform-origin:0 0;">wings : 25</span>
<div style="left:918px;top:437.9px;width:106px;height:20.8px;background:#2b2b2b;"></div>
<div style="left:945.5px;top:437.9px;width:78.5px;height:19.8px;background:#272727;"></div>
<div style="left:918px;top:457.7px;width:106px;height:1px;background:#1a1a1a;"></div>
<div style="left:931.5px;top:437.9px;width:1px;height:20.8px;background:#1c1c1c;"></div>
<div style="left:944.8px;top:437.9px;width:1px;height:20.8px;background:#1c1c1c;"></div>
<div style="left:934.3px;top:443.4px;width:7.5px;height:8.5px;border:1px solid #1e1e1e;border-radius:1.500px;"></div>
<svg style="left:918.7px;top:443.7px;" width="12" height="8.4" viewBox="0 0 12 8.4"><path d="M0.500 4.200C2.500 0.600 9.500 0.600 11.500 4.200C9.500 7.800 2.500 7.800 0.500 4.200Z" fill="#dcdcdc"/><circle cx="6" cy="4" r="2.100" fill="#2b2b2b"/><circle cx="6" cy="4" r="1" fill="#dcdcdc"/></svg>
<svg style="left:948.5px;top:444.4px;" width="5" height="8" viewBox="0 0 5 8"><path d="M0.800 0.600L4 4L0.800 7.400" fill="none" stroke="#e0e0e0" stroke-width="1.100"/></svg>
<svg style="left:957px;top:442.4px;" width="12" height="11" viewBox="0 0 12 11"><path d="M3 2.500V0.600H11.400V8H9.500" fill="none" stroke="#acacac" stroke-width="1"/><rect x="0.600" y="2.500" width="9" height="8" rx="0.800" fill="#6e6e6e" stroke="#acacac" stroke-width="1.100"/><rect x="2.800" y="4.500" width="4.800" height="4" fill="#222" stroke="#acacac" stroke-width="0.600"/></svg>
<span class="t" style="left:976px;top:440px;font-size:8px;color:#d2d2d2;line-height:11px;transform:scaleX(0.882);transform-origin:0 0;">100 % Normal</span>
<span class="t" style="left:976px;top:448px;font-size:8px;color:#d2d2d2;line-height:11px;transform:scaleX(0.877);transform-origin:0 0;">color hair : 24</span>
<div style="left:918px;top:458.7px;width:106px;height:20.8px;background:#2b2b2b;"></div>
<div style="left:945.5px;top:458.7px;width:78.5px;height:19.8px;background:#272727;"></div>
<div style="left:918px;top:478.5px;width:106px;height:1px;background:#1a1a1a;"></div>
<div style="left:931.5px;top:458.7px;width:1px;height:20.8px;background:#1c1c1c;"></div>
<div style="left:944.8px;top:458.7px;width:1px;height:20.8px;background:#1c1c1c;"></div>
<div style="left:934.3px;top:464.2px;width:7.5px;height:8.5px;border:1px solid #1e1e1e;border-radius:1.500px;"></div>
<svg style="left:918.7px;top:464.5px;" width="12" height="8.4" viewBox="0 0 12 8.4"><path d="M0.500 4.200C2.500 0.600 9.500 0.600 11.500 4.200C9.500 7.800 2.500 7.800 0.500 4.200Z" fill="#dcdcdc"/><circle cx="6" cy="4" r="2.100" fill="#2b2b2b"/><circle cx="6" cy="4" r="1" fill="#dcdcdc"/></svg>
<svg style="left:948.5px;top:465.2px;" width="5" height="8" viewBox="0 0 5 8"><path d="M0.800 0.600L4 4L0.800 7.400" fill="none" stroke="#e0e0e0" stroke-width="1.100"/></svg>
<svg style="left:957px;top:463.2px;" width="12" height="11" viewBox="0 0 12 11"><path d="M3 2.500V0.600H11.400V8H9.500" fill="none" stroke="#acacac" stroke-width="1"/><rect x="0.600" y="2.500" width="9" height="8" rx="0.800" fill="#6e6e6e" stroke="#acacac" stroke-width="1.100"/><rect x="2.800" y="4.500" width="4.800" height="4" fill="#222" stroke="#acacac" stroke-width="0.600"/></svg>
<span class="t" style="left:976px;top:460px;font-size:8px;color:#d2d2d2;line-height:11px;transform:scaleX(0.882);transform-origin:0 0;">100 % Normal</span>
<span class="t" style="left:976px;top:468px;font-size:8px;color:#d2d2d2;line-height:11px;transform:scaleX(0.829);transform-origin:0 0;">color body : 24</span>
<div style="left:918px;top:479.5px;width:106px;height:20.8px;background:#2b2b2b;"></div>
<div style="left:945.5px;top:479.5px;width:78.5px;height:19.8px;background:#272727;"></div>
<div style="left:918px;top:499.3px;width:106px;height:1px;background:#1a1a1a;"></div>
<div style="left:931.5px;top:479.5px;width:1px;height:20.8px;background:#1c1c1c;"></div>
<div style="left:944.8px;top:479.5px;width:1px;height:20.8px;background:#1c1c1c;"></div>
<div style="left:934.3px;top:485.0px;width:7.5px;height:8.5px;border:1px solid #1e1e1e;border-radius:1.500px;"></div>
<svg style="left:918.7px;top:485.3px;" width="12" height="8.4" viewBox="0 0 12 8.4"><path d="M0.500 4.200C2.500 0.600 9.500 0.600 11.500 4.200C9.500 7.800 2.500 7.800 0.500 4.200Z" fill="#dcdcdc"/><circle cx="6" cy="4" r="2.100" fill="#2b2b2b"/><circle cx="6" cy="4" r="1" fill="#dcdcdc"/></svg>
<svg style="left:948.5px;top:486.0px;" width="5" height="8" viewBox="0 0 5 8"><path d="M0.800 0.600L4 4L0.800 7.400" fill="none" stroke="#e0e0e0" stroke-width="1.100"/></svg>
<svg style="left:957px;top:484.0px;" width="12" height="11" viewBox="0 0 12 11"><path d="M3 2.500V0.600H11.400V8H9.500" fill="none" stroke="#acacac" stroke-width="1"/><rect x="0.600" y="2.500" width="9" height="8" rx="0.800" fill="#6e6e6e" stroke="#acacac" stroke-width="1.100"/><rect x="2.800" y="4.500" width="4.800" height="4" fill="#222" stroke="#acacac" stroke-width="0.600"/></svg>
<span class="t" style="left:976px;top:481px;font-size:8px;color:#d2d2d2;line-height:11px;transform:scaleX(0.882);transform-origin:0 0;">100 % Normal</span>
<span class="t" style="left:976px;top:489px;font-size:8px;color:#d2d2d2;line-height:11px;transform:scaleX(0.841);transform-origin:0 0;">color dress : 24</span>
<div style="left:918px;top:500.3px;width:106px;height:20.8px;background:#2b2b2b;"></div>
<div style="left:945.5px;top:500.3px;width:78.5px;height:19.8px;background:#272727;"></div>
<div style="left:918px;top:520.1px;width:106px;height:1px;background:#1a1a1a;"></div>
<div style="left:931.5px;top:500.3px;width:1px;height:20.8px;background:#1c1c1c;"></div>
<div style="left:944.8px;top:500.3px;width:1px;height:20.8px;background:#1c1c1c;"></div>
<div style="left:934.3px;top:505.8px;width:7.5px;height:8.5px;border:1px solid #1e1e1e;border-radius:1.500px;"></div>
<svg style="left:918.7px;top:506.1px;" width="12" height="8.4" viewBox="0 0 12 8.4"><path d="M0.500 4.200C2.500 0.600 9.500 0.600 11.500 4.200C9.500 7.800 2.500 7.800 0.500 4.200Z" fill="#dcdcdc"/><circle cx="6" cy="4" r="2.100" fill="#2b2b2b"/><circle cx="6" cy="4" r="1" fill="#dcdcdc"/></svg>
<svg style="left:948.5px;top:506.8px;" width="5" height="8" viewBox="0 0 5 8"><path d="M0.800 0.600L4 4L0.800 7.400" fill="none" stroke="#e0e0e0" stroke-width="1.100"/></svg>
<svg style="left:957px;top:504.8px;" width="12" height="11" viewBox="0 0 12 11"><path d="M3 2.500V0.600H11.400V8H9.500" fill="none" stroke="#acacac" stroke-width="1"/><rect x="0.600" y="2.500" width="9" height="8" rx="0.800" fill="#6e6e6e" stroke="#acacac" stroke-width="1.100"/><rect x="2.800" y="4.500" width="4.800" height="4" fill="#222" stroke="#acacac" stroke-width="0.600"/></svg>
<span class="t" style="left:976px;top:502px;font-size:8px;color:#d2d2d2;line-height:11px;transform:scaleX(0.882);transform-origin:0 0;">100 % Normal</span>
<span class="t" style="left:976px;top:510px;font-size:8px;color:#d2d2d2;line-height:11px;transform:scaleX(0.843);transform-origin:0 0;">color jewel : 25</span>
<div style="left:918px;top:521.1px;width:106px;height:20.8px;background:#2b2b2b;"></div>
<div style="left:945.5px;top:521.1px;width:78.5px;height:19.8px;background:#272727;"></div>
<div style="left:918px;top:540.9px;width:106px;height:1px;background:#1a1a1a;"></div>
<div style="left:931.5px;top:521.1px;width:1px;height:20.8px;background:#1c1c1c;"></div>
<div style="left:944.8px;top:521.1px;width:1px;height:20.8px;background:#1c1c1c;"></div>
<div style="left:934.3px;top:526.6px;width:7.5px;height:8.5px;border:1px solid #1e1e1e;border-radius:1.500px;"></div>
<svg style="left:918.7px;top:526.9px;" width="12" height="8.4" viewBox="0 0 12 8.4"><path d="M0.500 4.200C2.500 0.600 9.500 0.600 11.500 4.200C9.500 7.800 2.500 7.800 0.500 4.200Z" fill="#dcdcdc"/><circle cx="6" cy="4" r="2.100" fill="#2b2b2b"/><circle cx="6" cy="4" r="1" fill="#dcdcdc"/></svg>
<svg style="left:948.5px;top:527.6px;" width="5" height="8" viewBox="0 0 5 8"><path d="M0.800 0.600L4 4L0.800 7.400" fill="none" stroke="#e0e0e0" stroke-width="1.100"/></svg>
<svg style="left:957px;top:525.6px;" width="12" height="11" viewBox="0 0 12 11"><path d="M3 2.500V0.600H11.400V8H9.500" fill="none" stroke="#acacac" stroke-width="1"/><rect x="0.600" y="2.500" width="9" height="8" rx="0.800" fill="#6e6e6e" stroke="#acacac" stroke-width="1.100"/><rect x="2.800" y="4.500" width="4.800" height="4" fill="#222" stroke="#acacac" stroke-width="0.600"/></svg>
<span class="t" style="left:976px;top:523px;font-size:8px;color:#d2d2d2;line-height:11px;transform:scaleX(0.882);transform-origin:0 0;">100 % Normal</span>
<span class="t" style="left:976px;top:531px;font-size:8px;color:#d2d2d2;line-height:11px;transform:scaleX(0.828);transform-origin:0 0;">color wings : 24</span>
<div style="left:158px;top:398px;width:721px;height:143px;background:#222;"></div>
<div style="left:172.5px;top:411px;width:706.5px;height:130px;background:#303030;"></div>
<svg style="left:161.5px;top:526px;" width="7" height="5" viewBox="0 0 7 5"><path d="M0.500 0.800L3.500 4L6.500 0.800" fill="none" stroke="#666" stroke-width="1"/></svg>
<div style="left:176px;top:404px;width:4.5px;height:1px;background:#555;"></div>
<div style="left:176px;top:406px;width:4.5px;height:1px;background:#555;"></div>
<div style="left:176px;top:408px;width:4.5px;height:1px;background:#555;"></div>
<div style="left:185.5px;top:401.5px;width:46.5px;height:10px;background:#303030;"></div>
<svg style="left:189px;top:402.3px;" width="10" height="9" viewBox="0 0 10 9"><rect x="0.500" y="0.500" width="9" height="8" rx="0.800" fill="none" stroke="#c8c8c8" stroke-width="1"/><path d="M3 0.500V8.500M7 0.500V8.500" stroke="#c8c8c8" stroke-width="0.900"/><rect x="4.300" y="2" width="1.400" height="1.600" fill="#c8c8c8"/><rect x="4.300" y="5.200" width="1.400" height="1.600" fill="#c8c8c8"/></svg>
<span class="t" style="left:204px;top:402px;font-size:7.8px;color:#bdbdbd;line-height:11px;transform:scaleX(0.848);transform-origin:0 0;">Timeline</span>
<svg style="left:174px;top:416px;" width="10" height="11" viewBox="0 0 10 11"><rect x="0.500" y="0.500" width="9" height="9" rx="0.800" fill="none" stroke="#585858" stroke-width="1"/><path d="M1.500 5.500C3 2 4.500 2 5.500 5C6.500 8 8 7 8.500 4.500" fill="none" stroke="#585858" stroke-width="0.800"/></svg>
<svg style="left:195px;top:416px;" width="10" height="11" viewBox="0 0 10 11"><rect x="0.500" y="0.500" width="8.500" height="9.500" rx="0.800" fill="none" stroke="#c4c4c4" stroke-width="1"/><path d="M2.800 0.500V10M6.700 0.500V10" stroke="#c4c4c4" stroke-width="0.800"/><rect x="4" y="2.200" width="1.500" height="1.800" fill="#c4c4c4"/><rect x="4" y="6.200" width="1.500" height="1.800" fill="#c4c4c4"/></svg>
<svg style="left:208px;top:416px;" width="13" height="11" viewBox="0 0 13 11"><rect x="0.500" y="0.500" width="8.500" height="9.500" rx="0.800" fill="none" stroke="#c4c4c4" stroke-width="1"/><path d="M2.800 0.500V10M6.700 0.500V10" stroke="#c4c4c4" stroke-width="0.800"/><rect x="4" y="2.200" width="1.500" height="1.800" fill="#c4c4c4"/><rect x="4" y="6.200" width="1.500" height="1.800" fill="#c4c4c4"/><circle cx="9.800" cy="8.300" r="2.300" fill="#2d2d2d" stroke="#c4c4c4" stroke-width="0.800"/><path d="M8.400 8.300H11.200M9.800 6.900V9.700" stroke="#c4c4c4" stroke-width="0.800"/></svg>
<svg style="left:228px;top:416px;" width="12" height="11" viewBox="0 0 12 11"><circle cx="4.500" cy="4.500" r="3.700" fill="none" stroke="#c4c4c4" stroke-width="1"/><path d="M7.200 7.200L10.800 10.800" stroke="#c4c4c4" stroke-width="1.300"/><path d="M2.700 4.500H6.300" stroke="#c4c4c4" stroke-width="0.900"/></svg>
<svg style="left:242px;top:416px;" width="12" height="11" viewBox="0 0 12 11"><circle cx="4.500" cy="4.500" r="3.700" fill="none" stroke="#c4c4c4" stroke-width="1"/><path d="M7.200 7.200L10.800 10.800" stroke="#c4c4c4" stroke-width="1.300"/><path d="M2.700 4.500H6.300M4.500 2.700V6.300" stroke="#c4c4c4" stroke-width="0.900"/></svg>
<svg style="left:264.5px;top:417px;" width="9" height="10" viewBox="0 0 9 10"><path d="M1 1V9" stroke="#585858" stroke-width="1.300"/><path d="M8 1L2.500 5L8 9Z" fill="#585858"/></svg>
<svg style="left:277.5px;top:417px;" width="9" height="10" viewBox="0 0 9 10"><path d="M6.500 1L1 5L6.500 9Z" fill="#585858"/><path d="M8 1V9" stroke="#585858" stroke-width="1.300"/></svg>
<svg style="left:292.5px;top:417px;" width="8" height="10" viewBox="0 0 8 10"><path d="M0.500 0.500L7.500 5L0.500 9.500Z" fill="#e8e8e8"/></svg>
<svg style="left:305px;top:417px;" width="9" height="10" viewBox="0 0 9 10"><path d="M1 1V9" stroke="#c4c4c4" stroke-width="1.300"/><path d="M2.500 1L8.500 5L2.500 9Z" fill="#c4c4c4"/></svg>
<svg style="left:319.5px;top:417px;" width="9" height="10" viewBox="0 0 9 10"><path d="M0.500 1L6.500 5L0.500 9Z" fill="#c4c4c4"/><path d="M7.500 1V9" stroke="#c4c4c4" stroke-width="1.300"/></svg>
<div style="left:336.5px;top:414.5px;width:14px;height:13.5px;background:#46506b;"></div>
<svg style="left:338.5px;top:416px;" width="10" height="11" viewBox="0 0 10 11"><path d="M1 5V4C1 2.500 2 1.800 3.500 1.800H8M9 6V7C9 8.500 8 9.200 6.500 9.200H2" fill="none" stroke="#cfe4f6" stroke-width="1.200"/><path d="M6.800 0L9 1.800L6.800 3.600M3.200 7.400L1 9.200L3.200 11" fill="none" stroke="#cfe4f6" stroke-width="1"/></svg>
<svg style="left:358px;top:416px;" width="12" height="11" viewBox="0 0 12 11"><path d="M2.500 2.500V0.600H10.400V7.500H9" fill="none" stroke="#c4c4c4" stroke-width="0.900"/><rect x="0.600" y="2.500" width="8.400" height="6.500" fill="#777" stroke="#c4c4c4" stroke-width="1"/><circle cx="9" cy="9" r="2.200" fill="#2d2d2d" stroke="#c4c4c4" stroke-width="0.800"/><path d="M7.700 9H10.300M9 7.700V10.300" stroke="#c4c4c4" stroke-width="0.800"/></svg>
<svg style="left:372.8px;top:416px;" width="12" height="11" viewBox="0 0 12 11"><path d="M2.500 2.500V0.600H10.400V7.500H9" fill="none" stroke="#585858" stroke-width="0.900"/><rect x="0.600" y="2.500" width="8.400" height="6.500" fill="none" stroke="#585858" stroke-width="1"/><circle cx="9" cy="9" r="2.200" fill="#2d2d2d" stroke="#585858" stroke-width="0.800"/><path d="M7.700 9H10.300M9 7.700V10.300" stroke="#585858" stroke-width="0.800"/></svg>
<svg style="left:386.8px;top:416px;" width="12" height="11" viewBox="0 0 12 11"><rect x="0.600" y="0.600" width="10" height="7" rx="0.800" fill="none" stroke="#c4c4c4" stroke-width="1"/><path d="M0.600 2.500H10.600" stroke="#c4c4c4" stroke-width="0.800" stroke-dasharray="1.200 0.800"/><ellipse cx="4" cy="9.300" rx="2" ry="1.400" fill="none" stroke="#c4c4c4" stroke-width="0.800"/><ellipse cx="7" cy="9.300" rx="2" ry="1.400" fill="none" stroke="#c4c4c4" stroke-width="0.800"/></svg>
<svg style="left:401px;top:416px;" width="12" height="11" viewBox="0 0 12 11"><rect x="0.600" y="0.600" width="10" height="7" rx="0.800" fill="none" stroke="#c4c4c4" stroke-width="1"/><path d="M0.600 2.500H10.600" stroke="#c4c4c4" stroke-width="0.800" stroke-dasharray="1.200 0.800"/><ellipse cx="4" cy="9.300" rx="2" ry="1.400" fill="none" stroke="#c4c4c4" stroke-width="0.800"/><ellipse cx="7" cy="9.300" rx="2" ry="1.400" fill="none" stroke="#c4c4c4" stroke-width="0.800"/></svg>
<div style="left:419px;top:414.5px;width:14px;height:13.5px;background:#46506b;"></div>
<svg style="left:421px;top:416px;" width="10" height="11" viewBox="0 0 10 11"><path d="M2.500 2.500V0.600H9.500V7.500H8" fill="none" stroke="#dfe4f2" stroke-width="0.900"/><rect x="0.600" y="2.500" width="7.400" height="7" fill="#8ea0d0" stroke="#dfe4f2" stroke-width="1"/></svg>
<svg style="left:441.5px;top:416px;" width="11" height="11" viewBox="0 0 11 11"><path d="M1 9L5 5M3 2.500L7.500 7M5 1L9 5L7 7L3 3Z" fill="none" stroke="#585858" stroke-width="0.900"/></svg>
<div style="left:453px;top:414.5px;width:10.5px;height:13px;background:#3a3a3a;"></div>
<svg style="left:455.5px;top:416px;" width="6" height="11" viewBox="0 0 6 11"><path d="M0.500 3.500L3 6L5.500 3.500" fill="none" stroke="#8a8a8a" stroke-width="0.900"/></svg>
<svg style="left:467px;top:416px;" width="11" height="11" viewBox="0 0 11 11"><path d="M5 1L9 4.500L5 8L1 4.500Z" fill="none" stroke="#585858" stroke-width="0.900"/><rect x="5.500" y="5.500" width="4.500" height="4.500" fill="#2d2d2d" stroke="#585858" stroke-width="0.800"/></svg>
<svg style="left:480px;top:416px;" width="12" height="11" viewBox="0 0 12 11"><path d="M2 9.500V2.500H10.500V7C10.500 8.500 9.500 9.500 8 9.500Z" fill="none" stroke="#c4c4c4" stroke-width="1"/><path d="M0.500 10.500H6" stroke="#c4c4c4" stroke-width="0.800"/><path d="M4 1H11.500V6" fill="none" stroke="#c4c4c4" stroke-width="0.700"/></svg>
<svg style="left:494px;top:416px;" width="10" height="11" viewBox="0 0 10 11"><path d="M1 9L2 6.500L7.500 1L9 2.500L3.500 8Z" fill="none" stroke="#585858" stroke-width="0.900"/><path d="M0.500 10H7" stroke="#585858" stroke-width="0.800"/></svg>
<span class="t" style="left:760.3px;top:415px;font-size:8.5px;color:#c2c2c2;line-height:12px;">1</span>
<span class="t" style="left:785.8px;top:415px;font-size:8.5px;color:#c2c2c2;line-height:12px;">/</span>
<span class="t" style="left:808.4px;top:415px;font-size:8.5px;color:#c2c2c2;line-height:12px;">1</span>
<span class="t" style="left:833.6px;top:415px;font-size:8.5px;color:#c2c2c2;line-height:12px;">/</span>
<span class="t" style="left:853.3px;top:415px;font-size:8.5px;color:#c2c2c2;line-height:12px;">24</span>
<div style="left:172.5px;top:428.5px;width:706.5px;height:17px;background:#363636;"></div>
<div style="left:173px;top:428.5px;width:92px;height:16.5px;background:#3c3c3c;border:1px solid #505050;border-radius:1px;"></div>
<span class="t" style="left:197.7px;top:431px;font-size:8.5px;color:#cecece;line-height:12px;transform:scaleX(0.854);transform-origin:0 0;">Timeline 1</span>
<svg style="left:256.5px;top:434.5px;" width="7" height="5" viewBox="0 0 7 5"><path d="M0.500 0.800L3.500 4L6.500 0.800" fill="none" stroke="#bbb" stroke-width="1"/></svg>
<div style="left:268px;top:428.5px;width:110.4px;height:17px;background:#45474d;"></div>
<div style="left:378.4px;top:428.5px;width:197.04000000000008px;height:17px;background:#2c2c2c;"></div>
<div style="left:575.44px;top:428.5px;width:213.76px;height:17px;background:#45474d;"></div>
<div style="left:789.2px;top:428.5px;width:89.8px;height:17px;background:#3a3a3a;"></div>
<div style="left:371.3px;top:428.5px;width:7.1px;height:17px;background:#2020a8;"></div>
<div style="left:575.74px;top:428.5px;width:7.6px;height:17px;background:#2020a8;"></div>
<div style="left:378.4px;top:428.5px;width:8.21px;height:17px;background:#b41e1e;"></div>
<svg style="left:380.4px;top:430px;" width="4" height="6" viewBox="0 0 4 6"><path d="M1 0.500H3V5L2 5.800L1 5Z" fill="#f0d0d0"/></svg>
<span class="t" style="left:380.89px;top:437px;font-size:8px;color:#e0a0a0;line-height:11px;transform:scaleX(0.950);transform-origin:0 0;">1</span>
<span class="t" style="left:397.31px;top:437px;font-size:8px;color:#c8c8c8;line-height:11px;transform:scaleX(0.950);transform-origin:0 0;">3</span>
<span class="t" style="left:413.73px;top:437px;font-size:8px;color:#c8c8c8;line-height:11px;transform:scaleX(0.950);transform-origin:0 0;">5</span>
<span class="t" style="left:430.15px;top:437px;font-size:8px;color:#c8c8c8;line-height:11px;transform:scaleX(0.950);transform-origin:0 0;">7</span>
<span class="t" style="left:446.57px;top:437px;font-size:8px;color:#c8c8c8;line-height:11px;transform:scaleX(0.950);transform-origin:0 0;">9</span>
<span class="t" style="left:461.18px;top:437px;font-size:8px;color:#c8c8c8;line-height:11px;transform:scaleX(0.950);transform-origin:0 0;">11</span>
<span class="t" style="left:477.6px;top:437px;font-size:8px;color:#c8c8c8;line-height:11px;transform:scaleX(0.950);transform-origin:0 0;">13</span>
<span class="t" style="left:494.02px;top:437px;font-size:8px;color:#c8c8c8;line-height:11px;transform:scaleX(0.950);transform-origin:0 0;">15</span>
<span class="t" style="left:510.44px;top:437px;font-size:8px;color:#c8c8c8;line-height:11px;transform:scaleX(0.950);transform-origin:0 0;">17</span>
<span class="t" style="left:526.86px;top:437px;font-size:8px;color:#c8c8c8;line-height:11px;transform:scaleX(0.950);transform-origin:0 0;">19</span>
<span class="t" style="left:543.28px;top:437px;font-size:8px;color:#c8c8c8;line-height:11px;transform:scaleX(0.950);transform-origin:0 0;">21</span>
<span class="t" style="left:559.7px;top:437px;font-size:8px;color:#c8c8c8;line-height:11px;transform:scaleX(0.950);transform-origin:0 0;">23</span>
<span class="t" style="left:575.94px;top:437px;font-size:8px;color:#5a5ad8;line-height:11px;transform:scaleX(0.843);transform-origin:0 0;">25</span>
<span class="t" style="left:592.54px;top:437px;font-size:8px;color:#868686;line-height:11px;transform:scaleX(0.950);transform-origin:0 0;">27</span>
<span class="t" style="left:608.96px;top:437px;font-size:8px;color:#868686;line-height:11px;transform:scaleX(0.950);transform-origin:0 0;">29</span>
<span class="t" style="left:625.38px;top:437px;font-size:8px;color:#868686;line-height:11px;transform:scaleX(0.950);transform-origin:0 0;">31</span>
<span class="t" style="left:641.8px;top:437px;font-size:8px;color:#868686;line-height:11px;transform:scaleX(0.950);transform-origin:0 0;">33</span>
<span class="t" style="left:658.22px;top:437px;font-size:8px;color:#868686;line-height:11px;transform:scaleX(0.950);transform-origin:0 0;">35</span>
<span class="t" style="left:674.64px;top:437px;font-size:8px;color:#868686;line-height:11px;transform:scaleX(0.950);transform-origin:0 0;">37</span>
<span class="t" style="left:691.06px;top:437px;font-size:8px;color:#868686;line-height:11px;transform:scaleX(0.950);transform-origin:0 0;">39</span>
<span class="t" style="left:707.48px;top:437px;font-size:8px;color:#868686;line-height:11px;transform:scaleX(0.950);transform-origin:0 0;">41</span>
<span class="t" style="left:723.9px;top:437px;font-size:8px;color:#868686;line-height:11px;transform:scaleX(0.950);transform-origin:0 0;">43</span>
<span class="t" style="left:740.32px;top:437px;font-size:8px;color:#868686;line-height:11px;transform:scaleX(0.950);transform-origin:0 0;">45</span>
<span class="t" style="left:756.74px;top:437px;font-size:8px;color:#868686;line-height:11px;transform:scaleX(0.950);transform-origin:0 0;">47</span>
<span class="t" style="left:773.16px;top:437px;font-size:8px;color:#868686;line-height:11px;transform:scaleX(0.950);transform-origin:0 0;">49</span>
<span class="t" style="left:789.58px;top:437px;font-size:8px;color:#868686;line-height:11px;transform:scaleX(0.950);transform-origin:0 0;">51</span>
<span class="t" style="left:806.0px;top:437px;font-size:8px;color:#868686;line-height:11px;transform:scaleX(0.950);transform-origin:0 0;">53</span>
<span class="t" style="left:822.42px;top:437px;font-size:8px;color:#868686;line-height:11px;transform:scaleX(0.950);transform-origin:0 0;">55</span>
<span class="t" style="left:838.84px;top:437px;font-size:8px;color:#868686;line-height:11px;transform:scaleX(0.950);transform-origin:0 0;">57</span>
<span class="t" style="left:855.26px;top:437px;font-size:8px;color:#868686;line-height:11px;transform:scaleX(0.950);transform-origin:0 0;">59</span>
<span class="t" style="left:870.68px;top:437px;font-size:8px;color:#868686;line-height:11px;transform:scaleX(0.950);transform-origin:0 0;">61</span>
<span class="t" style="left:362.93px;top:437px;font-size:8px;color:#8c8c8c;line-height:11px;transform:scaleX(0.920);transform-origin:0 0;">-2</span>
<span class="t" style="left:346.23px;top:437px;font-size:8px;color:#8c8c8c;line-height:11px;transform:scaleX(0.920);transform-origin:0 0;">-4</span>
<span class="t" style="left:329.93px;top:437px;font-size:8px;color:#8c8c8c;line-height:11px;transform:scaleX(0.920);transform-origin:0 0;">-6</span>
<span class="t" style="left:313.53px;top:437px;font-size:8px;color:#8c8c8c;line-height:11px;transform:scaleX(0.920);transform-origin:0 0;">-8</span>
<span class="t" style="left:295.48px;top:437px;font-size:8px;color:#8c8c8c;line-height:11px;transform:scaleX(0.920);transform-origin:0 0;">-10</span>
<span class="t" style="left:279.38px;top:437px;font-size:8px;color:#8c8c8c;line-height:11px;transform:scaleX(0.920);transform-origin:0 0;">-12</span>
<span class="t" style="left:268.8px;top:437px;font-size:8px;color:#8c8c8c;line-height:11px;">4</span>
<span class="t" style="left:586.5px;top:429px;font-size:8px;color:#8a8a8a;line-height:11px;">1</span>
<span class="t" style="left:791.5px;top:429px;font-size:8px;color:#8a8a8a;line-height:11px;">2</span>
<svg style="left:268px;top:428.5px;" width="611" height="17" viewBox="0 0 611 17"><path d="M3.67 15.500V17M11.88 15.500V17M20.09 15.500V17M28.30 15.500V17M36.51 15.500V17M44.72 15.500V17M52.93 15.500V17M61.14 15.500V17M69.35 15.500V17M77.56 15.500V17M85.77 15.500V17M93.98 15.500V17M102.19 15.500V17M110.40 15.500V17M110.40 15.500V17M118.61 15.500V17M126.82 15.500V17M135.03 15.500V17M143.24 15.500V17M151.45 15.500V17M159.66 15.500V17M167.87 15.500V17M176.08 15.500V17M184.29 15.500V17M192.50 15.500V17M200.71 15.500V17M208.92 15.500V17M217.13 15.500V17M225.34 15.500V17M233.55 15.500V17M241.76 15.500V17M249.97 15.500V17M258.18 15.500V17M266.39 15.500V17M274.60 15.500V17M282.81 15.500V17M291.02 15.500V17M299.23 15.500V17M307.44 15.500V17M315.65 15.500V17M323.86 15.500V17M332.07 15.500V17M340.28 15.500V17M348.49 15.500V17M356.70 15.500V17M364.91 15.500V17M373.12 15.500V17M381.33 15.500V17M389.54 15.500V17M397.75 15.500V17M405.96 15.500V17M414.17 15.500V17M422.38 15.500V17M430.59 15.500V17M438.80 15.500V17M447.01 15.500V17M455.22 15.500V17M463.43 15.500V17M471.64 15.500V17M479.85 15.500V17M488.06 15.500V17M496.27 15.500V17M504.48 15.500V17M512.69 15.500V17M520.90 15.500V17M529.11 15.500V17M537.32 15.500V17M545.53 15.500V17M553.74 15.500V17M561.95 15.500V17M570.16 15.500V17M578.37 15.500V17M586.58 15.500V17M594.79 15.500V17M603.00 15.500V17" stroke="#45474d" stroke-width="0.700"/></svg>
<div style="left:158px;top:445.500px;width:721px;height:95.500px;overflow:hidden"><div style="left:-158px;top:-445.500px;width:1024px;height:541px">
<div style="left:172.5px;top:445.7px;width:14px;height:60px;background:#2b2b2b;"></div>
<svg style="left:173.8px;top:451.7px;" width="12" height="8.4" viewBox="0 0 12 8.4"><path d="M0.500 4.200C2.500 0.600 9.500 0.600 11.500 4.200C9.500 7.800 2.500 7.800 0.500 4.200Z" fill="#dcdcdc"/><circle cx="6" cy="4" r="2.100" fill="#2b2b2b"/><circle cx="6" cy="4" r="1" fill="#dcdcdc"/></svg>
<div style="left:187px;top:446.5px;width:81px;height:18px;background:#3d4559;"></div>
<svg style="left:189.3px;top:450.7px;" width="11" height="10" viewBox="0 0 11 10"><path d="M2.500 2V0.600H10.400V7.500H9" fill="none" stroke="#c8c8c8" stroke-width="0.900"/><rect x="0.600" y="2" width="8.400" height="7.400" rx="0.800" fill="#555" stroke="#c8c8c8" stroke-width="1"/></svg>
<svg style="left:205px;top:451.7px;" width="8" height="8" viewBox="0 0 8 8"><rect x="0.500" y="0.500" width="7.200" height="7.200" fill="none" stroke="#aaa" stroke-width="0.900"/><path d="M1 4.100H7.200M4.100 1V7.200" stroke="#aaa" stroke-width="0.900"/></svg>
<span class="t" style="left:215.500px;top:451px;line-height:11px;font-size:7.8px;color:#d0d0d0;width:52px;overflow:hidden;"><span style="display:inline-block;transform:scaleX(0.823);transform-origin:0 0">eye mouth : 24 : cel</span></span>
<div style="left:187px;top:464.5px;width:81px;height:41.2px;background:#2b2b2b;"></div>
<div style="left:187.6px;top:465.0px;width:33.9px;height:19.8px;background:#fff;border:1.200px solid #b8b8b8;"></div>
<div style="left:223px;top:465.0px;width:34.2px;height:19.8px;background:#fff;"></div>
<div style="left:258.7px;top:465.0px;width:9.3px;height:19.8px;background:#fff;"></div>
<div style="left:187px;top:485.2px;width:81px;height:12.5px;background:#1f1f1f;"></div>
<div style="left:187.6px;top:485.2px;width:33.9px;height:12.5px;background:#2f3649;"></div>
<div style="left:221.9px;top:485.2px;width:0.8px;height:12.5px;background:#444;"></div>
<div style="left:257.6px;top:485.2px;width:0.8px;height:12.5px;background:#444;"></div>
<span class="t" style="left:188.3px;top:486px;font-size:7.8px;color:#d8d8d8;line-height:11px;">1</span>
<span class="t" style="left:224px;top:486px;font-size:7.8px;color:#d8d8d8;line-height:11px;">2</span>
<span class="t" style="left:259.5px;top:486px;font-size:7.8px;color:#d8d8d8;line-height:11px;">3</span>
<div style="left:187.6px;top:498.0px;width:6.5px;height:6.8px;background:#3a3a3a;"></div>
<svg style="left:189px;top:499.2px;" width="4" height="5" viewBox="0 0 4 5"><path d="M3 0.500L0.800 2.500L3 4.500" fill="none" stroke="#888" stroke-width="0.900"/></svg>
<div style="left:196px;top:498.4px;width:6px;height:6px;background:#484848;border-radius:3px;"></div>
<div style="left:261.5px;top:498.0px;width:6.5px;height:6.8px;background:#3a3a3a;"></div>
<svg style="left:263px;top:499.2px;" width="4" height="5" viewBox="0 0 4 5"><path d="M0.800 0.500L3 2.500L0.800 4.500" fill="none" stroke="#888" stroke-width="0.900"/></svg>
<div style="left:268px;top:445.7px;width:110.4px;height:60.5px;background:#3f4145;"></div>
<div style="left:575.44px;top:445.7px;width:213.76px;height:60.5px;background:#3f4145;"></div>
<div style="left:789.2px;top:445.7px;width:81.8px;height:60.5px;background:#383838;"></div>
<svg style="left:0px;top:445.7px;" width="879" height="60.5" viewBox="0 0 879 60.5"><path d="M271.67 0V60.500M279.88 0V60.500M296.30 0V60.500M304.51 0V60.500M312.72 0V60.500M320.93 0V60.500M329.14 0V60.500M345.56 0V60.500M353.77 0V60.500M361.98 0V60.500M370.19 0V60.500M583.65 0V60.500M591.86 0V60.500M600.07 0V60.500M608.28 0V60.500M616.49 0V60.500M632.91 0V60.500M641.12 0V60.500M649.33 0V60.500M657.54 0V60.500M665.75 0V60.500M682.17 0V60.500M690.38 0V60.500M698.59 0V60.500M706.80 0V60.500M715.01 0V60.500M731.43 0V60.500M739.64 0V60.500M747.85 0V60.500M756.06 0V60.500M764.27 0V60.500M780.69 0V60.500M788.90 0V60.500M797.11 0V60.500M805.32 0V60.500M813.53 0V60.500M829.95 0V60.500M838.16 0V60.500M846.37 0V60.500M854.58 0V60.500M862.79 0V60.500" stroke="#3b3d41" stroke-width="0.600"/><path d="M288.09 0V60.500M337.35 0V60.500M624.70 0V60.500M673.96 0V60.500M723.22 0V60.500M772.48 0V60.500M821.74 0V60.500M871.00 0V60.500" stroke="#313337" stroke-width="0.900"/></svg>
<div style="left:378.4px;top:445.7px;width:197.04000000000008px;height:5.5px;background:#303030;"></div>
<div style="left:379.4px;top:450.0px;width:195.04000000000008px;height:1.3px;background:#6a6a6a;"></div>
<div style="left:379.4px;top:446.9px;width:3.2px;height:3.6px;border:0.900px solid #b0b0b0;border-bottom:none;"></div>
<div style="left:570.94px;top:446.9px;width:3.2px;height:3.6px;border:0.900px solid #b0b0b0;border-bottom:none;"></div>
<div style="left:378.4px;top:451.2px;width:197.04000000000008px;height:13.5px;background:#2a2a2a;"></div>
<div style="left:378.4px;top:451.2px;width:8.21px;height:13.5px;background:#6b2121;"></div>
<div style="left:378.4px;top:464.7px;width:197.04000000000008px;height:19.8px;background:#fff;"></div>
<div style="left:378.4px;top:484.5px;width:197.04000000000008px;height:21.7px;background:#2a2a2a;"></div>
<div style="left:378.4px;top:484.5px;width:8.21px;height:13px;background:#6b2121;"></div>
<svg style="left:378.4px;top:445.7px;" width="200" height="60.5" viewBox="0 0 200 60.5"><path d="M8.21 5.500V19M16.42 5.500V19M24.63 5.500V19M32.84 5.500V19M41.05 5.500V19M49.26 5.500V19M57.47 5.500V19M65.68 5.500V19M73.89 5.500V19M82.10 5.500V19M90.31 5.500V19M98.52 5.500V19M106.73 5.500V19M114.94 5.500V19M123.15 5.500V19M131.36 5.500V19M139.57 5.500V19M147.78 5.500V19M155.99 5.500V19M164.20 5.500V19M172.41 5.500V19M180.62 5.500V19M188.83 5.500V19" stroke="#3c3c3c" stroke-width="1.100"/><path d="M8.21 19V38.800M16.42 19V38.800M24.63 19V38.800M32.84 19V38.800M41.05 19V38.800M49.26 19V38.800M57.47 19V38.800M65.68 19V38.800M73.89 19V38.800M82.10 19V38.800M90.31 19V38.800M98.52 19V38.800M106.73 19V38.800M114.94 19V38.800M123.15 19V38.800M131.36 19V38.800M139.57 19V38.800M147.78 19V38.800M155.99 19V38.800M164.20 19V38.800M172.41 19V38.800M180.62 19V38.800M188.83 19V38.800" stroke="#8c8c8c" stroke-width="1.100"/></svg>
<span class="t" style="left:380.64px;top:490px;font-size:7.8px;color:#cacaca;line-height:11px;transform:scaleX(1.000);transform-origin:0 0;">1</span>
<span class="t" style="left:388.85px;top:490px;font-size:7.8px;color:#cacaca;line-height:11px;transform:scaleX(1.000);transform-origin:0 0;">2</span>
<span class="t" style="left:397.06px;top:490px;font-size:7.8px;color:#cacaca;line-height:11px;transform:scaleX(1.000);transform-origin:0 0;">3</span>
<span class="t" style="left:405.27px;top:490px;font-size:7.8px;color:#cacaca;line-height:11px;transform:scaleX(1.000);transform-origin:0 0;">4</span>
<span class="t" style="left:413.48px;top:490px;font-size:7.8px;color:#cacaca;line-height:11px;transform:scaleX(1.000);transform-origin:0 0;">5</span>
<span class="t" style="left:421.69px;top:490px;font-size:7.8px;color:#cacaca;line-height:11px;transform:scaleX(1.000);transform-origin:0 0;">6</span>
<span class="t" style="left:429.9px;top:490px;font-size:7.8px;color:#cacaca;line-height:11px;transform:scaleX(1.000);transform-origin:0 0;">7</span>
<span class="t" style="left:438.11px;top:490px;font-size:7.8px;color:#cacaca;line-height:11px;transform:scaleX(1.000);transform-origin:0 0;">8</span>
<span class="t" style="left:446.32px;top:490px;font-size:7.8px;color:#cacaca;line-height:11px;transform:scaleX(1.000);transform-origin:0 0;">9</span>
<span class="t" style="left:452.36px;top:490px;font-size:7.8px;color:#cacaca;line-height:11px;transform:scaleX(0.930);transform-origin:0 0;">10</span>
<span class="t" style="left:460.57px;top:490px;font-size:7.8px;color:#cacaca;line-height:11px;transform:scaleX(0.930);transform-origin:0 0;">11</span>
<span class="t" style="left:468.78px;top:490px;font-size:7.8px;color:#cacaca;line-height:11px;transform:scaleX(0.930);transform-origin:0 0;">12</span>
<span class="t" style="left:476.99px;top:490px;font-size:7.8px;color:#cacaca;line-height:11px;transform:scaleX(0.930);transform-origin:0 0;">13</span>
<span class="t" style="left:485.2px;top:490px;font-size:7.8px;color:#cacaca;line-height:11px;transform:scaleX(0.930);transform-origin:0 0;">14</span>
<span class="t" style="left:493.41px;top:490px;font-size:7.8px;color:#cacaca;line-height:11px;transform:scaleX(0.930);transform-origin:0 0;">15</span>
<span class="t" style="left:501.62px;top:490px;font-size:7.8px;color:#cacaca;line-height:11px;transform:scaleX(0.930);transform-origin:0 0;">16</span>
<span class="t" style="left:509.83px;top:490px;font-size:7.8px;color:#cacaca;line-height:11px;transform:scaleX(0.930);transform-origin:0 0;">17</span>
<span class="t" style="left:518.04px;top:490px;font-size:7.8px;color:#cacaca;line-height:11px;transform:scaleX(0.930);transform-origin:0 0;">18</span>
<span class="t" style="left:526.25px;top:490px;font-size:7.8px;color:#cacaca;line-height:11px;transform:scaleX(0.930);transform-origin:0 0;">19</span>
<span class="t" style="left:534.46px;top:490px;font-size:7.8px;color:#cacaca;line-height:11px;transform:scaleX(0.930);transform-origin:0 0;">20</span>
<span class="t" style="left:542.67px;top:490px;font-size:7.8px;color:#cacaca;line-height:11px;transform:scaleX(0.930);transform-origin:0 0;">21</span>
<span class="t" style="left:550.88px;top:490px;font-size:7.8px;color:#cacaca;line-height:11px;transform:scaleX(0.930);transform-origin:0 0;">22</span>
<span class="t" style="left:559.09px;top:490px;font-size:7.8px;color:#cacaca;line-height:11px;transform:scaleX(0.930);transform-origin:0 0;">23</span>
<span class="t" style="left:567.3px;top:490px;font-size:7.8px;color:#cacaca;line-height:11px;transform:scaleX(0.930);transform-origin:0 0;">24</span>
<div style="left:172.5px;top:505.7px;width:698.5px;height:0.8px;background:#1e1e1e;"></div>
<div style="left:172.5px;top:506.2px;width:14px;height:60px;background:#2b2b2b;"></div>
<svg style="left:173.8px;top:512.2px;" width="12" height="8.4" viewBox="0 0 12 8.4"><path d="M0.500 4.200C2.500 0.600 9.500 0.600 11.500 4.200C9.500 7.800 2.500 7.800 0.500 4.200Z" fill="#dcdcdc"/><circle cx="6" cy="4" r="2.100" fill="#2b2b2b"/><circle cx="6" cy="4" r="1" fill="#dcdcdc"/></svg>
<div style="left:187px;top:507.0px;width:81px;height:18px;background:#2d2d2d;"></div>
<svg style="left:189.3px;top:511.2px;" width="11" height="10" viewBox="0 0 11 10"><path d="M2.500 2V0.600H10.400V7.500H9" fill="none" stroke="#c8c8c8" stroke-width="0.900"/><rect x="0.600" y="2" width="8.400" height="7.400" rx="0.800" fill="#555" stroke="#c8c8c8" stroke-width="1"/></svg>
<svg style="left:205px;top:512.2px;" width="8" height="8" viewBox="0 0 8 8"><rect x="0.500" y="0.500" width="7.200" height="7.200" fill="none" stroke="#aaa" stroke-width="0.900"/><path d="M1 4.100H7.200M4.100 1V7.200" stroke="#aaa" stroke-width="0.900"/></svg>
<span class="t" style="left:215.500px;top:511px;line-height:11px;font-size:7.8px;color:#d0d0d0;width:52px;overflow:hidden;"><span style="display:inline-block;transform:scaleX(0.851);transform-origin:0 0">eyeee : 24 : cel</span></span>
<div style="left:187px;top:525.0px;width:81px;height:41.2px;background:#2b2b2b;"></div>
<div style="left:187.6px;top:525.5px;width:33.9px;height:19.8px;background:#fff;"></div>
<div style="left:223px;top:525.5px;width:34.2px;height:19.8px;background:#fff;"></div>
<div style="left:258.7px;top:525.5px;width:9.3px;height:19.8px;background:#fff;"></div>
<div style="left:187px;top:545.7px;width:81px;height:12.5px;background:#1f1f1f;"></div>
<div style="left:221.9px;top:545.7px;width:0.8px;height:12.5px;background:#444;"></div>
<div style="left:257.6px;top:545.7px;width:0.8px;height:12.5px;background:#444;"></div>
<span class="t" style="left:188.3px;top:547px;font-size:7.8px;color:#d8d8d8;line-height:11px;">1</span>
<span class="t" style="left:224px;top:547px;font-size:7.8px;color:#d8d8d8;line-height:11px;">2</span>
<span class="t" style="left:259.5px;top:547px;font-size:7.8px;color:#d8d8d8;line-height:11px;">3</span>
<div style="left:187.6px;top:558.5px;width:6.5px;height:6.8px;background:#3a3a3a;"></div>
<svg style="left:189px;top:559.7px;" width="4" height="5" viewBox="0 0 4 5"><path d="M3 0.500L0.800 2.500L3 4.500" fill="none" stroke="#888" stroke-width="0.900"/></svg>
<div style="left:196px;top:558.9px;width:6px;height:6px;background:#484848;border-radius:3px;"></div>
<div style="left:261.5px;top:558.5px;width:6.5px;height:6.8px;background:#3a3a3a;"></div>
<svg style="left:263px;top:559.7px;" width="4" height="5" viewBox="0 0 4 5"><path d="M0.800 0.500L3 2.500L0.800 4.500" fill="none" stroke="#888" stroke-width="0.900"/></svg>
<div style="left:268px;top:506.2px;width:110.4px;height:60.5px;background:#3f4145;"></div>
<div style="left:575.44px;top:506.2px;width:213.76px;height:60.5px;background:#3f4145;"></div>
<div style="left:789.2px;top:506.2px;width:81.8px;height:60.5px;background:#383838;"></div>
<svg style="left:0px;top:506.2px;" width="879" height="60.5" viewBox="0 0 879 60.5"><path d="M271.67 0V60.500M279.88 0V60.500M296.30 0V60.500M304.51 0V60.500M312.72 0V60.500M320.93 0V60.500M329.14 0V60.500M345.56 0V60.500M353.77 0V60.500M361.98 0V60.500M370.19 0V60.500M583.65 0V60.500M591.86 0V60.500M600.07 0V60.500M608.28 0V60.500M616.49 0V60.500M632.91 0V60.500M641.12 0V60.500M649.33 0V60.500M657.54 0V60.500M665.75 0V60.500M682.17 0V60.500M690.38 0V60.500M698.59 0V60.500M706.80 0V60.500M715.01 0V60.500M731.43 0V60.500M739.64 0V60.500M747.85 0V60.500M756.06 0V60.500M764.27 0V60.500M780.69 0V60.500M788.90 0V60.500M797.11 0V60.500M805.32 0V60.500M813.53 0V60.500M829.95 0V60.500M838.16 0V60.500M846.37 0V60.500M854.58 0V60.500M862.79 0V60.500" stroke="#3b3d41" stroke-width="0.600"/><path d="M288.09 0V60.500M337.35 0V60.500M624.70 0V60.500M673.96 0V60.500M723.22 0V60.500M772.48 0V60.500M821.74 0V60.500M871.00 0V60.500" stroke="#313337" stroke-width="0.900"/></svg>
<div style="left:378.4px;top:506.2px;width:197.04000000000008px;height:5.5px;background:#303030;"></div>
<div style="left:379.4px;top:510.5px;width:195.04000000000008px;height:1.3px;background:#6a6a6a;"></div>
<div style="left:379.4px;top:507.4px;width:3.2px;height:3.6px;border:0.900px solid #b0b0b0;border-bottom:none;"></div>
<div style="left:570.94px;top:507.4px;width:3.2px;height:3.6px;border:0.900px solid #b0b0b0;border-bottom:none;"></div>
<div style="left:378.4px;top:511.7px;width:197.04000000000008px;height:13.5px;background:#2a2a2a;"></div>
<div style="left:378.4px;top:511.7px;width:8.21px;height:13.5px;background:#6b2121;"></div>
<div style="left:378.4px;top:525.2px;width:197.04000000000008px;height:19.8px;background:#fff;"></div>
<div style="left:378.4px;top:545.0px;width:197.04000000000008px;height:21.7px;background:#2a2a2a;"></div>
<div style="left:378.4px;top:545.0px;width:8.21px;height:13px;background:#6b2121;"></div>
<svg style="left:378.4px;top:506.2px;" width="200" height="60.5" viewBox="0 0 200 60.5"><path d="M8.21 5.500V19M16.42 5.500V19M24.63 5.500V19M32.84 5.500V19M41.05 5.500V19M49.26 5.500V19M57.47 5.500V19M65.68 5.500V19M73.89 5.500V19M82.10 5.500V19M90.31 5.500V19M98.52 5.500V19M106.73 5.500V19M114.94 5.500V19M123.15 5.500V19M131.36 5.500V19M139.57 5.500V19M147.78 5.500V19M155.99 5.500V19M164.20 5.500V19M172.41 5.500V19M180.62 5.500V19M188.83 5.500V19" stroke="#3c3c3c" stroke-width="1.100"/><path d="M8.21 19V38.800M16.42 19V38.800M24.63 19V38.800M32.84 19V38.800M41.05 19V38.800M49.26 19V38.800M57.47 19V38.800M65.68 19V38.800M73.89 19V38.800M82.10 19V38.800M90.31 19V38.800M98.52 19V38.800M106.73 19V38.800M114.94 19V38.800M123.15 19V38.800M131.36 19V38.800M139.57 19V38.800M147.78 19V38.800M155.99 19V38.800M164.20 19V38.800M172.41 19V38.800M180.62 19V38.800M188.83 19V38.800" stroke="#8c8c8c" stroke-width="1.100"/></svg>
<span class="t" style="left:380.64px;top:551px;font-size:7.8px;color:#cacaca;line-height:11px;transform:scaleX(1.000);transform-origin:0 0;">1</span>
<span class="t" style="left:388.85px;top:551px;font-size:7.8px;color:#cacaca;line-height:11px;transform:scaleX(1.000);transform-origin:0 0;">2</span>
<span class="t" style="left:397.06px;top:551px;font-size:7.8px;color:#cacaca;line-height:11px;transform:scaleX(1.000);transform-origin:0 0;">3</span>
<span class="t" style="left:405.27px;top:551px;font-size:7.8px;color:#cacaca;line-height:11px;transform:scaleX(1.000);transform-origin:0 0;">4</span>
<span class="t" style="left:413.48px;top:551px;font-size:7.8px;color:#cacaca;line-height:11px;transform:scaleX(1.000);transform-origin:0 0;">5</span>
<span class="t" style="left:421.69px;top:551px;font-size:7.8px;color:#cacaca;line-height:11px;transform:scaleX(1.000);transform-origin:0 0;">6</span>
<span class="t" style="left:429.9px;top:551px;font-size:7.8px;color:#cacaca;line-height:11px;transform:scaleX(1.000);transform-origin:0 0;">7</span>
<span class="t" style="left:438.11px;top:551px;font-size:7.8px;color:#cacaca;line-height:11px;transform:scaleX(1.000);transform-origin:0 0;">8</span>
<span class="t" style="left:446.32px;top:551px;font-size:7.8px;color:#cacaca;line-height:11px;transform:scaleX(1.000);transform-origin:0 0;">9</span>
<span class="t" style="left:452.36px;top:551px;font-size:7.8px;color:#cacaca;line-height:11px;transform:scaleX(0.930);transform-origin:0 0;">10</span>
<span class="t" style="left:460.57px;top:551px;font-size:7.8px;color:#cacaca;line-height:11px;transform:scaleX(0.930);transform-origin:0 0;">11</span>
<span class="t" style="left:468.78px;top:551px;font-size:7.8px;color:#cacaca;line-height:11px;transform:scaleX(0.930);transform-origin:0 0;">12</span>
<span class="t" style="left:476.99px;top:551px;font-size:7.8px;color:#cacaca;line-height:11px;transform:scaleX(0.930);transform-origin:0 0;">13</span>
<span class="t" style="left:485.2px;top:551px;font-size:7.8px;color:#cacaca;line-height:11px;transform:scaleX(0.930);transform-origin:0 0;">14</span>
<span class="t" style="left:493.41px;top:551px;font-size:7.8px;color:#cacaca;line-height:11px;transform:scaleX(0.930);transform-origin:0 0;">15</span>
<span class="t" style="left:501.62px;top:551px;font-size:7.8px;color:#cacaca;line-height:11px;transform:scaleX(0.930);transform-origin:0 0;">16</span>
<span class="t" style="left:509.83px;top:551px;font-size:7.8px;color:#cacaca;line-height:11px;transform:scaleX(0.930);transform-origin:0 0;">17</span>
<span class="t" style="left:518.04px;top:551px;font-size:7.8px;color:#cacaca;line-height:11px;transform:scaleX(0.930);transform-origin:0 0;">18</span>
<span class="t" style="left:526.25px;top:551px;font-size:7.8px;color:#cacaca;line-height:11px;transform:scaleX(0.930);transform-origin:0 0;">19</span>
<span class="t" style="left:534.46px;top:551px;font-size:7.8px;color:#cacaca;line-height:11px;transform:scaleX(0.930);transform-origin:0 0;">20</span>
<span class="t" style="left:542.67px;top:551px;font-size:7.8px;color:#cacaca;line-height:11px;transform:scaleX(0.930);transform-origin:0 0;">21</span>
<span class="t" style="left:550.88px;top:551px;font-size:7.8px;color:#cacaca;line-height:11px;transform:scaleX(0.930);transform-origin:0 0;">22</span>
<span class="t" style="left:559.09px;top:551px;font-size:7.8px;color:#cacaca;line-height:11px;transform:scaleX(0.930);transform-origin:0 0;">23</span>
<span class="t" style="left:567.3px;top:551px;font-size:7.8px;color:#cacaca;line-height:11px;transform:scaleX(0.930);transform-origin:0 0;">24</span>
<div style="left:172.5px;top:566.2px;width:698.5px;height:0.8px;background:#1e1e1e;"></div>
<div style="left:268px;top:505.8px;width:603px;height:0.9px;background:#2f3135;"></div>
<div style="left:377.7px;top:445.5px;width:1.2px;height:96px;background:#3434b0;"></div>
<div style="left:575.1400000000001px;top:445.5px;width:1.2px;height:96px;background:#3434b0;"></div>
</div></div>
<div style="left:871px;top:445.5px;width:8px;height:95.5px;background:#2b2b2b;"></div>
<div style="left:871.5px;top:447px;width:7px;height:7px;background:#3a3a3a;"></div>
<svg style="left:872.7px;top:449px;" width="5" height="4" viewBox="0 0 5 4"><path d="M0.500 3L2.500 0.800L4.500 3" fill="none" stroke="#999" stroke-width="0.900"/></svg>
<div style="left:872px;top:457.5px;width:6px;height:6px;background:#484848;border-radius:3px;"></div>
<div style="left:871.5px;top:533px;width:7px;height:7px;background:#3a3a3a;"></div>
<svg style="left:872.7px;top:535px;" width="5" height="4" viewBox="0 0 5 4"><path d="M0.500 0.800L2.500 3L4.500 0.800" fill="none" stroke="#999" stroke-width="0.900"/></svg>
</body></html>
